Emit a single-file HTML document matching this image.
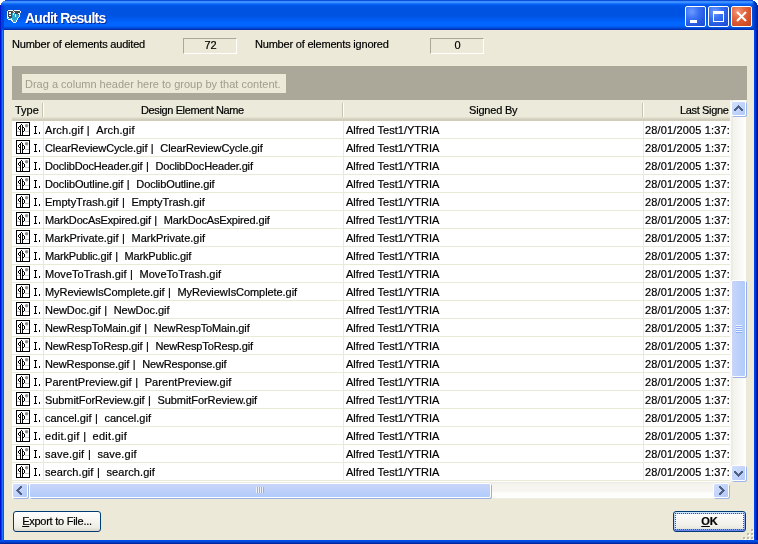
<!DOCTYPE html>
<html><head><meta charset="utf-8"><style>
*{box-sizing:border-box;margin:0;padding:0}
html,body{width:758px;height:544px;overflow:hidden;background:#fff}
body{position:relative;-webkit-text-stroke:0.2px currentColor;font-family:"Liberation Sans",sans-serif;font-size:11px;color:#000}
b,i{font-weight:normal;font-style:normal}
.abs{position:absolute}
#win{will-change:transform;position:absolute;left:0;top:0;width:758px;height:544px;background:#0831d9;overflow:hidden}
.wc{position:absolute;background:#fff;height:1px}
#title{position:absolute;left:0;top:0;width:758px;height:30px;background:linear-gradient(to bottom,#0b4edc 0px,#0b4edc 1px,#3d8fff 1px,#3d8fff 2px,#3d8fff 2px,#3d8fff 3px,#1a74ff 3px,#1a74ff 4px,#0562f6 4px,#0562f6 5px,#0057e8 5px,#0057e8 6px,#0055e5 6px,#0055e5 7px,#0054e3 7px,#0054e3 8px,#0053e2 8px,#0053e2 9px,#0053e1 9px,#0053e1 10px,#0053e1 10px,#0053e1 11px,#0053e1 11px,#0053e1 12px,#0053e1 12px,#0053e1 13px,#0053e1 13px,#0053e1 14px,#0053e1 14px,#0053e1 15px,#0054e3 15px,#0054e3 16px,#0055e5 16px,#0055e5 17px,#0057e8 17px,#0057e8 18px,#005af0 18px,#005af0 19px,#005cf3 19px,#005cf3 20px,#005ef6 20px,#005ef6 21px,#0062fb 21px,#0062fb 22px,#0066ff 22px,#0066ff 23px,#0066ff 23px,#0066ff 24px,#0066ff 24px,#0066ff 25px,#0066ff 25px,#0066ff 26px,#005ef6 26px,#005ef6 27px,#0052e0 27px,#0052e0 28px,#0042cc 28px,#0042cc 29px,#0030b4 29px,#0030b4 30px)}
#frameL{position:absolute;left:0;top:30px;width:4px;height:514px;background:linear-gradient(to right,#0010d0 0,#0010d0 1px,#0a3ee0 1px,#0a3ee0 2px,#1a78ff 2px,#1a78ff 3px,#0058f0 3px,#0058f0 4px)}
#frameR{position:absolute;left:754px;top:30px;width:4px;height:514px;background:linear-gradient(to right,#0044f0 0,#0044f0 1px,#0038e0 1px,#0038e0 2px,#0022b0 2px,#0022b0 3px,#001080 3px,#001080 4px)}
#frameB{position:absolute;left:0;top:540px;width:758px;height:4px;background:linear-gradient(to bottom,#0050e8 0,#0048dc 2px,#0030b0 3px,#001c90 4px)}
#content{position:absolute;left:4px;top:30px;width:750px;height:510px;background:#ece9d8;}
.ttl{-webkit-text-stroke:0;position:absolute;left:25px;top:10px;font-weight:bold;font-size:14px;line-height:16px;color:#fff;text-shadow:1px 1px 0 #0a2a9a;letter-spacing:-0.75px}
.lbl{position:absolute;white-space:pre;line-height:13px}
.box{position:absolute;height:16px;border-top:1px solid #aca899;border-left:1px solid #aca899;border-bottom:1px solid #fff;border-right:1px solid #fff;text-align:center;line-height:13px;padding-left:1px}
#grp{position:absolute;left:12px;top:66px;width:735px;height:34px;background:#aca899}
#grpbox{-webkit-text-stroke:0;position:absolute;left:22px;top:74px;width:264px;height:19px;background:#ece9d8;color:#a09d8b;white-space:pre;line-height:19px;padding-left:3px;padding-top:1px}
#hdr{position:absolute;left:12px;top:100px;width:718px;height:21px;background:linear-gradient(to bottom,#ebeadb 0,#ebeadb 17px,#e4e1d1 17px,#e4e1d1 18px,#dad7c6 18px,#dad7c6 19px,#d0cdbc 19px,#d0cdbc 21px)}
.hd{position:absolute;top:4px;white-space:pre;line-height:13px}
.dv{position:absolute;top:3px;width:2px;height:14px;border-left:1px solid #c7c5b2;border-right:1px solid #fff}
#rows{position:absolute;left:12px;top:0;width:718px;height:481px;overflow:hidden}
.row{position:absolute;left:0;width:718px;height:18px;background:#fff;border-bottom:1px solid #e8e9d6}
.row .ic{position:absolute;left:4px;width:14px;height:14px}
.row .ic svg{display:block}
.I{position:absolute;left:22px;top:5px;width:3px;height:8px;border-top:1px solid #000;border-bottom:1px solid #000}
.I::before{content:"";position:absolute;left:1px;top:0;width:1px;height:6px;background:#000}
.I::after{content:"";position:absolute;left:5px;top:5px;width:1px;height:2px;background:#000}
.row span{position:absolute;top:3px;white-space:pre;line-height:12px}
.bar{}

.c1{left:33px}
.c2{left:334px}
.c3{left:633px;letter-spacing:0.15px}
.vl{position:absolute;top:121px;width:1px;height:360px;background:#e8e9d6}
#vsb{position:absolute;left:730px;top:100px;width:16px;height:382px;background:linear-gradient(to right,#fafaf6 0,#fafaf6 1px,#eeede5 1px,#eeede5 3px,#f3f2ec 3px,#fcfcfa 14px,#fefefd 16px)}
#hsb{position:absolute;left:12px;top:481px;width:718px;height:18px;background:linear-gradient(to bottom,#fdfdfb 0,#fdfdfb 1px,#edece4 1px,#edece4 2px,#f1f0ea 2px,#f5f4ef 4px,#f6f5f1 10px,#fdfdfb 12px,#fdfdfb 17px,#efede2 17px)}
#corner{position:absolute;left:730px;top:482px;width:17px;height:17px;background:#ece9d8}
.sb{position:absolute;border:1px solid #fff;border-radius:2px;background:linear-gradient(135deg,#d2defd 0,#c3d4fb 50%,#b3c8f6 100%);box-shadow:1px 1px 0 #9db6ea}
.sb svg{position:absolute}
.th{position:absolute;border:1px solid #fff;border-radius:2px;box-shadow:1px 1px 0 #98b0e4}
.btn{position:absolute;height:21px;border:1px solid #003c74;border-radius:3px;background:linear-gradient(to bottom,#fff 0,#f6f5f0 45%,#eeede5 80%,#dcd8cc 100%);text-align:center;line-height:19px}
.grip{position:absolute;width:2px;height:2px;background:#bdbaa8;box-shadow:1px 1px 0 #fff}
</style></head><body>

<div id="win">
<div id="title">
<svg class="abs" style="left:6px;top:9px" width="16" height="14" shape-rendering="crispEdges"><rect x="2" y="1" width="5" height="1" fill="#f4f8ff"/><rect x="8" y="1" width="6" height="1" fill="#f4f8ff"/><rect x="1" y="2" width="1" height="1" fill="#f4f8ff"/><rect x="2" y="2" width="5" height="1" fill="#4a4846"/><rect x="7" y="2" width="1" height="1" fill="#f4f8ff"/><rect x="8" y="2" width="6" height="1" fill="#4a4846"/><rect x="14" y="2" width="1" height="1" fill="#f4f8ff"/><rect x="1" y="3" width="1" height="1" fill="#f4f8ff"/><rect x="2" y="3" width="1" height="1" fill="#4a4846"/><rect x="3" y="3" width="2" height="1" fill="#f4f8ff"/><rect x="5" y="3" width="2" height="1" fill="#4a4846"/><rect x="7" y="3" width="1" height="1" fill="#2aa6cf"/><rect x="8" y="3" width="1" height="1" fill="#f4f8ff"/><rect x="9" y="3" width="5" height="1" fill="#4a4846"/><rect x="14" y="3" width="1" height="1" fill="#f4f8ff"/><rect x="1" y="4" width="1" height="1" fill="#f4f8ff"/><rect x="2" y="4" width="1" height="1" fill="#4a4846"/><rect x="3" y="4" width="2" height="1" fill="#f4f8ff"/><rect x="5" y="4" width="1" height="1" fill="#4a4846"/><rect x="6" y="4" width="1" height="1" fill="#2aa6cf"/><rect x="7" y="4" width="1" height="1" fill="#f4f8ff"/><rect x="8" y="4" width="1" height="1" fill="#2aa6cf"/><rect x="9" y="4" width="3" height="1" fill="#4a4846"/><rect x="12" y="4" width="2" height="1" fill="#f4f8ff"/><rect x="1" y="5" width="1" height="1" fill="#f4f8ff"/><rect x="2" y="5" width="4" height="1" fill="#4a4846"/><rect x="6" y="5" width="1" height="1" fill="#2aa6cf"/><rect x="7" y="5" width="1" height="1" fill="#f4f8ff"/><rect x="8" y="5" width="1" height="1" fill="#2aa6cf"/><rect x="9" y="5" width="1" height="1" fill="#f4f8ff"/><rect x="10" y="5" width="2" height="1" fill="#2aa6cf"/><rect x="12" y="5" width="1" height="1" fill="#4a4846"/><rect x="13" y="5" width="1" height="1" fill="#f4f8ff"/><rect x="1" y="6" width="1" height="1" fill="#f4f8ff"/><rect x="2" y="6" width="1" height="1" fill="#4a4846"/><rect x="3" y="6" width="2" height="1" fill="#f4f8ff"/><rect x="5" y="6" width="1" height="1" fill="#4a4846"/><rect x="6" y="6" width="3" height="1" fill="#2aa6cf"/><rect x="9" y="6" width="1" height="1" fill="#f4f8ff"/><rect x="10" y="6" width="3" height="1" fill="#2aa6cf"/><rect x="13" y="6" width="1" height="1" fill="#f4f8ff"/><rect x="1" y="7" width="1" height="1" fill="#f4f8ff"/><rect x="2" y="7" width="4" height="1" fill="#4a4846"/><rect x="6" y="7" width="3" height="1" fill="#2aa6cf"/><rect x="9" y="7" width="1" height="1" fill="#f4f8ff"/><rect x="10" y="7" width="3" height="1" fill="#2aa6cf"/><rect x="13" y="7" width="1" height="1" fill="#f4f8ff"/><rect x="1" y="8" width="2" height="1" fill="#f4f8ff"/><rect x="3" y="8" width="3" height="1" fill="#4a4846"/><rect x="6" y="8" width="6" height="1" fill="#2aa6cf"/><rect x="12" y="8" width="1" height="1" fill="#f4f8ff"/><rect x="1" y="9" width="1" height="1" fill="#f4f8ff"/><rect x="2" y="9" width="3" height="1" fill="#2aa6cf"/><rect x="5" y="9" width="1" height="1" fill="#f4f8ff"/><rect x="6" y="9" width="5" height="1" fill="#2aa6cf"/><rect x="11" y="9" width="1" height="1" fill="#f4f8ff"/><rect x="2" y="10" width="4" height="1" fill="#f4f8ff"/><rect x="6" y="10" width="5" height="1" fill="#2aa6cf"/><rect x="11" y="10" width="1" height="1" fill="#f4f8ff"/><rect x="5" y="11" width="2" height="1" fill="#f4f8ff"/><rect x="7" y="11" width="3" height="1" fill="#2aa6cf"/><rect x="10" y="11" width="1" height="1" fill="#f4f8ff"/><rect x="6" y="12" width="1" height="1" fill="#f4f8ff"/><rect x="7" y="12" width="3" height="1" fill="#2aa6cf"/><rect x="10" y="12" width="1" height="1" fill="#f4f8ff"/><rect x="7" y="13" width="3" height="1" fill="#f4f8ff"/></svg>
<div class="ttl">Audit Results</div>
<div class="abs" style="left:685px;top:6px;width:21px;height:21px;border:1px solid #fff;border-radius:2px;background:radial-gradient(circle at 30% 25%,#6d9bff 0,#3a72f4 35%,#2458e0 70%,#1c4ccc 100%)"><div class="abs" style="left:4px;top:13px;width:7px;height:3px;background:#fff"></div></div>
<div class="abs" style="left:708px;top:6px;width:21px;height:21px;border:1px solid #fff;border-radius:2px;background:radial-gradient(circle at 30% 25%,#6d9bff 0,#3a72f4 35%,#2458e0 70%,#1c4ccc 100%)"><div class="abs" style="left:4px;top:4px;width:11px;height:11px;border:1px solid #fff;border-top-width:3px"></div></div>
<div class="abs" style="left:731px;top:6px;width:21px;height:21px;border:1px solid #fff;border-radius:2px;background:radial-gradient(circle at 30% 25%,#f39a7c 0,#e4683f 35%,#d4502a 70%,#c4441e 100%)"><svg class="abs" style="left:4px;top:4px" width="11" height="11" viewBox="0 0 11 11"><path d="M1 1L10 10M10 1L1 10" stroke="#fff" stroke-width="2"/></svg></div>
</div>
<div class="abs" style="left:0;top:4px;width:4px;height:26px;background:linear-gradient(to bottom,rgba(0,64,220,0) 0,#0040dc 3px)"></div><div class="abs" style="left:0;top:1px;width:1px;height:29px;background:#0018c8"></div>
<div class="abs" style="left:752px;top:1px;width:6px;height:29px;background:linear-gradient(to right,rgba(0,64,216,0),#0040d0 2px,#0030b8 4px,#0020a0)"></div>
<div class="wc" style="left:0;top:0;width:5px"></div><div class="wc" style="left:0;top:1px;width:3px"></div><div class="wc" style="left:0;top:2px;width:2px"></div><div class="wc" style="left:0;top:3px;width:1px;height:2px"></div>
<div class="wc" style="left:753px;top:0;width:5px"></div><div class="wc" style="left:755px;top:1px;width:3px"></div><div class="wc" style="left:756px;top:2px;width:2px"></div><div class="wc" style="left:757px;top:3px;width:1px;height:2px"></div>
<div id="frameL"></div><div id="frameR"></div><div id="frameB"></div>
<div id="content"></div>
<div class="lbl" style="left:12px;top:38px;letter-spacing:-0.2px">Number of elements audited</div>
<div class="box" style="left:183px;top:38px;width:54px">72</div>
<div class="lbl" style="left:255px;top:38px;letter-spacing:-0.2px">Number of elements ignored</div>
<div class="box" style="left:430px;top:38px;width:54px">0</div>
<div id="grp"></div>
<div id="grpbox">Drag a column header here to group by that content.</div>
<div id="hdr">
<div class="hd" style="left:3px">Type</div>
<div class="dv" style="left:30px"></div>
<div class="hd" style="left:129px;letter-spacing:-0.38px">Design Element Name</div>
<div class="dv" style="left:330px"></div>
<div class="hd" style="left:457px;letter-spacing:-0.2px">Signed By</div>
<div class="dv" style="left:630px"></div>
<div class="hd" style="left:668px;letter-spacing:-0.35px">Last Signe</div>
</div>
<div id="rows">
<div class="row" style="top:121px"><div class="ic" style="top:1px"><svg width="14" height="14" viewBox="0 0 14 14"><rect width="14" height="14" fill="#fff"/><g shape-rendering="crispEdges"><rect x="0" y="0" width="14" height="1" fill="#000"/><rect x="0" y="1" width="1" height="1" fill="#000"/><rect x="13" y="1" width="1" height="1" fill="#000"/><rect x="0" y="2" width="1" height="1" fill="#000"/><rect x="5" y="2" width="1" height="1" fill="#000"/><rect x="13" y="2" width="1" height="1" fill="#000"/><rect x="0" y="3" width="1" height="1" fill="#000"/><rect x="4" y="3" width="1" height="1" fill="#000"/><rect x="6" y="3" width="1" height="1" fill="#000"/><rect x="13" y="3" width="1" height="1" fill="#000"/><rect x="0" y="4" width="1" height="1" fill="#000"/><rect x="3" y="4" width="2" height="1" fill="#000"/><rect x="6" y="4" width="1" height="1" fill="#000"/><rect x="13" y="4" width="1" height="1" fill="#000"/><rect x="0" y="5" width="1" height="1" fill="#000"/><rect x="2" y="5" width="1" height="1" fill="#000"/><rect x="4" y="5" width="1" height="1" fill="#000"/><rect x="6" y="5" width="2" height="1" fill="#000"/><rect x="13" y="5" width="1" height="1" fill="#000"/><rect x="0" y="6" width="1" height="1" fill="#000"/><rect x="2" y="6" width="1" height="1" fill="#000"/><rect x="4" y="6" width="1" height="1" fill="#000"/><rect x="6" y="6" width="1" height="1" fill="#000"/><rect x="8" y="6" width="1" height="1" fill="#000"/><rect x="13" y="6" width="1" height="1" fill="#000"/><rect x="0" y="7" width="1" height="1" fill="#000"/><rect x="3" y="7" width="2" height="1" fill="#000"/><rect x="6" y="7" width="1" height="1" fill="#000"/><rect x="8" y="7" width="1" height="1" fill="#000"/><rect x="13" y="7" width="1" height="1" fill="#000"/><rect x="0" y="8" width="1" height="1" fill="#000"/><rect x="4" y="8" width="1" height="1" fill="#000"/><rect x="6" y="8" width="1" height="1" fill="#000"/><rect x="8" y="8" width="1" height="1" fill="#000"/><rect x="13" y="8" width="1" height="1" fill="#000"/><rect x="0" y="9" width="1" height="1" fill="#000"/><rect x="1" y="9" width="3" height="1" fill="#c8c8c8"/><rect x="4" y="9" width="1" height="1" fill="#000"/><rect x="6" y="9" width="2" height="1" fill="#000"/><rect x="9" y="9" width="4" height="1" fill="#c8c8c8"/><rect x="13" y="9" width="1" height="1" fill="#000"/><rect x="0" y="10" width="1" height="1" fill="#000"/><rect x="4" y="10" width="1" height="1" fill="#000"/><rect x="6" y="10" width="1" height="1" fill="#000"/><rect x="13" y="10" width="1" height="1" fill="#000"/><rect x="0" y="11" width="1" height="1" fill="#000"/><rect x="4" y="11" width="1" height="1" fill="#000"/><rect x="6" y="11" width="1" height="1" fill="#000"/><rect x="13" y="11" width="1" height="1" fill="#000"/><rect x="0" y="12" width="1" height="1" fill="#000"/><rect x="4" y="12" width="1" height="1" fill="#000"/><rect x="6" y="12" width="1" height="1" fill="#000"/><rect x="13" y="12" width="1" height="1" fill="#000"/><rect x="0" y="13" width="14" height="1" fill="#000"/></g><circle cx="10.6" cy="3.8" r="1.7" fill="#8f8f8f"/></svg></div><i class="I"></i><span class="c1" style="letter-spacing:0.13px">Arch.gif</span><span class="bar" style="left:74.87px">|</span><span class="c1" style="left:84.30px;letter-spacing:0.13px">Arch.gif</span><span class="c2">Alfred Test1/YTRIA</span><span class="c3">28/01/2005 1:37:</span></div>
<div class="row" style="top:139px"><div class="ic" style="top:1px"><svg width="14" height="14" viewBox="0 0 14 14"><rect width="14" height="14" fill="#fff"/><g shape-rendering="crispEdges"><rect x="0" y="0" width="14" height="1" fill="#000"/><rect x="0" y="1" width="1" height="1" fill="#000"/><rect x="13" y="1" width="1" height="1" fill="#000"/><rect x="0" y="2" width="1" height="1" fill="#000"/><rect x="5" y="2" width="1" height="1" fill="#000"/><rect x="13" y="2" width="1" height="1" fill="#000"/><rect x="0" y="3" width="1" height="1" fill="#000"/><rect x="4" y="3" width="1" height="1" fill="#000"/><rect x="6" y="3" width="1" height="1" fill="#000"/><rect x="13" y="3" width="1" height="1" fill="#000"/><rect x="0" y="4" width="1" height="1" fill="#000"/><rect x="3" y="4" width="2" height="1" fill="#000"/><rect x="6" y="4" width="1" height="1" fill="#000"/><rect x="13" y="4" width="1" height="1" fill="#000"/><rect x="0" y="5" width="1" height="1" fill="#000"/><rect x="2" y="5" width="1" height="1" fill="#000"/><rect x="4" y="5" width="1" height="1" fill="#000"/><rect x="6" y="5" width="2" height="1" fill="#000"/><rect x="13" y="5" width="1" height="1" fill="#000"/><rect x="0" y="6" width="1" height="1" fill="#000"/><rect x="2" y="6" width="1" height="1" fill="#000"/><rect x="4" y="6" width="1" height="1" fill="#000"/><rect x="6" y="6" width="1" height="1" fill="#000"/><rect x="8" y="6" width="1" height="1" fill="#000"/><rect x="13" y="6" width="1" height="1" fill="#000"/><rect x="0" y="7" width="1" height="1" fill="#000"/><rect x="3" y="7" width="2" height="1" fill="#000"/><rect x="6" y="7" width="1" height="1" fill="#000"/><rect x="8" y="7" width="1" height="1" fill="#000"/><rect x="13" y="7" width="1" height="1" fill="#000"/><rect x="0" y="8" width="1" height="1" fill="#000"/><rect x="4" y="8" width="1" height="1" fill="#000"/><rect x="6" y="8" width="1" height="1" fill="#000"/><rect x="8" y="8" width="1" height="1" fill="#000"/><rect x="13" y="8" width="1" height="1" fill="#000"/><rect x="0" y="9" width="1" height="1" fill="#000"/><rect x="1" y="9" width="3" height="1" fill="#c8c8c8"/><rect x="4" y="9" width="1" height="1" fill="#000"/><rect x="6" y="9" width="2" height="1" fill="#000"/><rect x="9" y="9" width="4" height="1" fill="#c8c8c8"/><rect x="13" y="9" width="1" height="1" fill="#000"/><rect x="0" y="10" width="1" height="1" fill="#000"/><rect x="4" y="10" width="1" height="1" fill="#000"/><rect x="6" y="10" width="1" height="1" fill="#000"/><rect x="13" y="10" width="1" height="1" fill="#000"/><rect x="0" y="11" width="1" height="1" fill="#000"/><rect x="4" y="11" width="1" height="1" fill="#000"/><rect x="6" y="11" width="1" height="1" fill="#000"/><rect x="13" y="11" width="1" height="1" fill="#000"/><rect x="0" y="12" width="1" height="1" fill="#000"/><rect x="4" y="12" width="1" height="1" fill="#000"/><rect x="6" y="12" width="1" height="1" fill="#000"/><rect x="13" y="12" width="1" height="1" fill="#000"/><rect x="0" y="13" width="14" height="1" fill="#000"/></g><circle cx="10.6" cy="3.8" r="1.7" fill="#8f8f8f"/></svg></div><i class="I"></i><span class="c1" style="letter-spacing:-0.11px">ClearReviewCycle.gif</span><span class="bar" style="left:138.87px">|</span><span class="c1" style="left:148.30px;letter-spacing:-0.11px">ClearReviewCycle.gif</span><span class="c2">Alfred Test1/YTRIA</span><span class="c3">28/01/2005 1:37:</span></div>
<div class="row" style="top:157px"><div class="ic" style="top:1px"><svg width="14" height="14" viewBox="0 0 14 14"><rect width="14" height="14" fill="#fff"/><g shape-rendering="crispEdges"><rect x="0" y="0" width="14" height="1" fill="#000"/><rect x="0" y="1" width="1" height="1" fill="#000"/><rect x="13" y="1" width="1" height="1" fill="#000"/><rect x="0" y="2" width="1" height="1" fill="#000"/><rect x="5" y="2" width="1" height="1" fill="#000"/><rect x="13" y="2" width="1" height="1" fill="#000"/><rect x="0" y="3" width="1" height="1" fill="#000"/><rect x="4" y="3" width="1" height="1" fill="#000"/><rect x="6" y="3" width="1" height="1" fill="#000"/><rect x="13" y="3" width="1" height="1" fill="#000"/><rect x="0" y="4" width="1" height="1" fill="#000"/><rect x="3" y="4" width="2" height="1" fill="#000"/><rect x="6" y="4" width="1" height="1" fill="#000"/><rect x="13" y="4" width="1" height="1" fill="#000"/><rect x="0" y="5" width="1" height="1" fill="#000"/><rect x="2" y="5" width="1" height="1" fill="#000"/><rect x="4" y="5" width="1" height="1" fill="#000"/><rect x="6" y="5" width="2" height="1" fill="#000"/><rect x="13" y="5" width="1" height="1" fill="#000"/><rect x="0" y="6" width="1" height="1" fill="#000"/><rect x="2" y="6" width="1" height="1" fill="#000"/><rect x="4" y="6" width="1" height="1" fill="#000"/><rect x="6" y="6" width="1" height="1" fill="#000"/><rect x="8" y="6" width="1" height="1" fill="#000"/><rect x="13" y="6" width="1" height="1" fill="#000"/><rect x="0" y="7" width="1" height="1" fill="#000"/><rect x="3" y="7" width="2" height="1" fill="#000"/><rect x="6" y="7" width="1" height="1" fill="#000"/><rect x="8" y="7" width="1" height="1" fill="#000"/><rect x="13" y="7" width="1" height="1" fill="#000"/><rect x="0" y="8" width="1" height="1" fill="#000"/><rect x="4" y="8" width="1" height="1" fill="#000"/><rect x="6" y="8" width="1" height="1" fill="#000"/><rect x="8" y="8" width="1" height="1" fill="#000"/><rect x="13" y="8" width="1" height="1" fill="#000"/><rect x="0" y="9" width="1" height="1" fill="#000"/><rect x="1" y="9" width="3" height="1" fill="#c8c8c8"/><rect x="4" y="9" width="1" height="1" fill="#000"/><rect x="6" y="9" width="2" height="1" fill="#000"/><rect x="9" y="9" width="4" height="1" fill="#c8c8c8"/><rect x="13" y="9" width="1" height="1" fill="#000"/><rect x="0" y="10" width="1" height="1" fill="#000"/><rect x="4" y="10" width="1" height="1" fill="#000"/><rect x="6" y="10" width="1" height="1" fill="#000"/><rect x="13" y="10" width="1" height="1" fill="#000"/><rect x="0" y="11" width="1" height="1" fill="#000"/><rect x="4" y="11" width="1" height="1" fill="#000"/><rect x="6" y="11" width="1" height="1" fill="#000"/><rect x="13" y="11" width="1" height="1" fill="#000"/><rect x="0" y="12" width="1" height="1" fill="#000"/><rect x="4" y="12" width="1" height="1" fill="#000"/><rect x="6" y="12" width="1" height="1" fill="#000"/><rect x="13" y="12" width="1" height="1" fill="#000"/><rect x="0" y="13" width="14" height="1" fill="#000"/></g><circle cx="10.6" cy="3.8" r="1.7" fill="#8f8f8f"/></svg></div><i class="I"></i><span class="c1" style="letter-spacing:-0.15px">DoclibDocHeader.gif</span><span class="bar" style="left:133.97px">|</span><span class="c1" style="left:143.40px;letter-spacing:-0.15px">DoclibDocHeader.gif</span><span class="c2">Alfred Test1/YTRIA</span><span class="c3">28/01/2005 1:37:</span></div>
<div class="row" style="top:175px"><div class="ic" style="top:1px"><svg width="14" height="14" viewBox="0 0 14 14"><rect width="14" height="14" fill="#fff"/><g shape-rendering="crispEdges"><rect x="0" y="0" width="14" height="1" fill="#000"/><rect x="0" y="1" width="1" height="1" fill="#000"/><rect x="13" y="1" width="1" height="1" fill="#000"/><rect x="0" y="2" width="1" height="1" fill="#000"/><rect x="5" y="2" width="1" height="1" fill="#000"/><rect x="13" y="2" width="1" height="1" fill="#000"/><rect x="0" y="3" width="1" height="1" fill="#000"/><rect x="4" y="3" width="1" height="1" fill="#000"/><rect x="6" y="3" width="1" height="1" fill="#000"/><rect x="13" y="3" width="1" height="1" fill="#000"/><rect x="0" y="4" width="1" height="1" fill="#000"/><rect x="3" y="4" width="2" height="1" fill="#000"/><rect x="6" y="4" width="1" height="1" fill="#000"/><rect x="13" y="4" width="1" height="1" fill="#000"/><rect x="0" y="5" width="1" height="1" fill="#000"/><rect x="2" y="5" width="1" height="1" fill="#000"/><rect x="4" y="5" width="1" height="1" fill="#000"/><rect x="6" y="5" width="2" height="1" fill="#000"/><rect x="13" y="5" width="1" height="1" fill="#000"/><rect x="0" y="6" width="1" height="1" fill="#000"/><rect x="2" y="6" width="1" height="1" fill="#000"/><rect x="4" y="6" width="1" height="1" fill="#000"/><rect x="6" y="6" width="1" height="1" fill="#000"/><rect x="8" y="6" width="1" height="1" fill="#000"/><rect x="13" y="6" width="1" height="1" fill="#000"/><rect x="0" y="7" width="1" height="1" fill="#000"/><rect x="3" y="7" width="2" height="1" fill="#000"/><rect x="6" y="7" width="1" height="1" fill="#000"/><rect x="8" y="7" width="1" height="1" fill="#000"/><rect x="13" y="7" width="1" height="1" fill="#000"/><rect x="0" y="8" width="1" height="1" fill="#000"/><rect x="4" y="8" width="1" height="1" fill="#000"/><rect x="6" y="8" width="1" height="1" fill="#000"/><rect x="8" y="8" width="1" height="1" fill="#000"/><rect x="13" y="8" width="1" height="1" fill="#000"/><rect x="0" y="9" width="1" height="1" fill="#000"/><rect x="1" y="9" width="3" height="1" fill="#c8c8c8"/><rect x="4" y="9" width="1" height="1" fill="#000"/><rect x="6" y="9" width="2" height="1" fill="#000"/><rect x="9" y="9" width="4" height="1" fill="#c8c8c8"/><rect x="13" y="9" width="1" height="1" fill="#000"/><rect x="0" y="10" width="1" height="1" fill="#000"/><rect x="4" y="10" width="1" height="1" fill="#000"/><rect x="6" y="10" width="1" height="1" fill="#000"/><rect x="13" y="10" width="1" height="1" fill="#000"/><rect x="0" y="11" width="1" height="1" fill="#000"/><rect x="4" y="11" width="1" height="1" fill="#000"/><rect x="6" y="11" width="1" height="1" fill="#000"/><rect x="13" y="11" width="1" height="1" fill="#000"/><rect x="0" y="12" width="1" height="1" fill="#000"/><rect x="4" y="12" width="1" height="1" fill="#000"/><rect x="6" y="12" width="1" height="1" fill="#000"/><rect x="13" y="12" width="1" height="1" fill="#000"/><rect x="0" y="13" width="14" height="1" fill="#000"/></g><circle cx="10.6" cy="3.8" r="1.7" fill="#8f8f8f"/></svg></div><i class="I"></i><span class="c1" style="letter-spacing:-0.11px">DoclibOutline.gif</span><span class="bar" style="left:114.87px">|</span><span class="c1" style="left:124.30px;letter-spacing:-0.11px">DoclibOutline.gif</span><span class="c2">Alfred Test1/YTRIA</span><span class="c3">28/01/2005 1:37:</span></div>
<div class="row" style="top:193px"><div class="ic" style="top:1px"><svg width="14" height="14" viewBox="0 0 14 14"><rect width="14" height="14" fill="#fff"/><g shape-rendering="crispEdges"><rect x="0" y="0" width="14" height="1" fill="#000"/><rect x="0" y="1" width="1" height="1" fill="#000"/><rect x="13" y="1" width="1" height="1" fill="#000"/><rect x="0" y="2" width="1" height="1" fill="#000"/><rect x="5" y="2" width="1" height="1" fill="#000"/><rect x="13" y="2" width="1" height="1" fill="#000"/><rect x="0" y="3" width="1" height="1" fill="#000"/><rect x="4" y="3" width="1" height="1" fill="#000"/><rect x="6" y="3" width="1" height="1" fill="#000"/><rect x="13" y="3" width="1" height="1" fill="#000"/><rect x="0" y="4" width="1" height="1" fill="#000"/><rect x="3" y="4" width="2" height="1" fill="#000"/><rect x="6" y="4" width="1" height="1" fill="#000"/><rect x="13" y="4" width="1" height="1" fill="#000"/><rect x="0" y="5" width="1" height="1" fill="#000"/><rect x="2" y="5" width="1" height="1" fill="#000"/><rect x="4" y="5" width="1" height="1" fill="#000"/><rect x="6" y="5" width="2" height="1" fill="#000"/><rect x="13" y="5" width="1" height="1" fill="#000"/><rect x="0" y="6" width="1" height="1" fill="#000"/><rect x="2" y="6" width="1" height="1" fill="#000"/><rect x="4" y="6" width="1" height="1" fill="#000"/><rect x="6" y="6" width="1" height="1" fill="#000"/><rect x="8" y="6" width="1" height="1" fill="#000"/><rect x="13" y="6" width="1" height="1" fill="#000"/><rect x="0" y="7" width="1" height="1" fill="#000"/><rect x="3" y="7" width="2" height="1" fill="#000"/><rect x="6" y="7" width="1" height="1" fill="#000"/><rect x="8" y="7" width="1" height="1" fill="#000"/><rect x="13" y="7" width="1" height="1" fill="#000"/><rect x="0" y="8" width="1" height="1" fill="#000"/><rect x="4" y="8" width="1" height="1" fill="#000"/><rect x="6" y="8" width="1" height="1" fill="#000"/><rect x="8" y="8" width="1" height="1" fill="#000"/><rect x="13" y="8" width="1" height="1" fill="#000"/><rect x="0" y="9" width="1" height="1" fill="#000"/><rect x="1" y="9" width="3" height="1" fill="#c8c8c8"/><rect x="4" y="9" width="1" height="1" fill="#000"/><rect x="6" y="9" width="2" height="1" fill="#000"/><rect x="9" y="9" width="4" height="1" fill="#c8c8c8"/><rect x="13" y="9" width="1" height="1" fill="#000"/><rect x="0" y="10" width="1" height="1" fill="#000"/><rect x="4" y="10" width="1" height="1" fill="#000"/><rect x="6" y="10" width="1" height="1" fill="#000"/><rect x="13" y="10" width="1" height="1" fill="#000"/><rect x="0" y="11" width="1" height="1" fill="#000"/><rect x="4" y="11" width="1" height="1" fill="#000"/><rect x="6" y="11" width="1" height="1" fill="#000"/><rect x="13" y="11" width="1" height="1" fill="#000"/><rect x="0" y="12" width="1" height="1" fill="#000"/><rect x="4" y="12" width="1" height="1" fill="#000"/><rect x="6" y="12" width="1" height="1" fill="#000"/><rect x="13" y="12" width="1" height="1" fill="#000"/><rect x="0" y="13" width="14" height="1" fill="#000"/></g><circle cx="10.6" cy="3.8" r="1.7" fill="#8f8f8f"/></svg></div><i class="I"></i><span class="c1" style="letter-spacing:-0.01px">EmptyTrash.gif</span><span class="bar" style="left:109.97px">|</span><span class="c1" style="left:119.40px;letter-spacing:-0.01px">EmptyTrash.gif</span><span class="c2">Alfred Test1/YTRIA</span><span class="c3">28/01/2005 1:37:</span></div>
<div class="row" style="top:211px"><div class="ic" style="top:1px"><svg width="14" height="14" viewBox="0 0 14 14"><rect width="14" height="14" fill="#fff"/><g shape-rendering="crispEdges"><rect x="0" y="0" width="14" height="1" fill="#000"/><rect x="0" y="1" width="1" height="1" fill="#000"/><rect x="13" y="1" width="1" height="1" fill="#000"/><rect x="0" y="2" width="1" height="1" fill="#000"/><rect x="5" y="2" width="1" height="1" fill="#000"/><rect x="13" y="2" width="1" height="1" fill="#000"/><rect x="0" y="3" width="1" height="1" fill="#000"/><rect x="4" y="3" width="1" height="1" fill="#000"/><rect x="6" y="3" width="1" height="1" fill="#000"/><rect x="13" y="3" width="1" height="1" fill="#000"/><rect x="0" y="4" width="1" height="1" fill="#000"/><rect x="3" y="4" width="2" height="1" fill="#000"/><rect x="6" y="4" width="1" height="1" fill="#000"/><rect x="13" y="4" width="1" height="1" fill="#000"/><rect x="0" y="5" width="1" height="1" fill="#000"/><rect x="2" y="5" width="1" height="1" fill="#000"/><rect x="4" y="5" width="1" height="1" fill="#000"/><rect x="6" y="5" width="2" height="1" fill="#000"/><rect x="13" y="5" width="1" height="1" fill="#000"/><rect x="0" y="6" width="1" height="1" fill="#000"/><rect x="2" y="6" width="1" height="1" fill="#000"/><rect x="4" y="6" width="1" height="1" fill="#000"/><rect x="6" y="6" width="1" height="1" fill="#000"/><rect x="8" y="6" width="1" height="1" fill="#000"/><rect x="13" y="6" width="1" height="1" fill="#000"/><rect x="0" y="7" width="1" height="1" fill="#000"/><rect x="3" y="7" width="2" height="1" fill="#000"/><rect x="6" y="7" width="1" height="1" fill="#000"/><rect x="8" y="7" width="1" height="1" fill="#000"/><rect x="13" y="7" width="1" height="1" fill="#000"/><rect x="0" y="8" width="1" height="1" fill="#000"/><rect x="4" y="8" width="1" height="1" fill="#000"/><rect x="6" y="8" width="1" height="1" fill="#000"/><rect x="8" y="8" width="1" height="1" fill="#000"/><rect x="13" y="8" width="1" height="1" fill="#000"/><rect x="0" y="9" width="1" height="1" fill="#000"/><rect x="1" y="9" width="3" height="1" fill="#c8c8c8"/><rect x="4" y="9" width="1" height="1" fill="#000"/><rect x="6" y="9" width="2" height="1" fill="#000"/><rect x="9" y="9" width="4" height="1" fill="#c8c8c8"/><rect x="13" y="9" width="1" height="1" fill="#000"/><rect x="0" y="10" width="1" height="1" fill="#000"/><rect x="4" y="10" width="1" height="1" fill="#000"/><rect x="6" y="10" width="1" height="1" fill="#000"/><rect x="13" y="10" width="1" height="1" fill="#000"/><rect x="0" y="11" width="1" height="1" fill="#000"/><rect x="4" y="11" width="1" height="1" fill="#000"/><rect x="6" y="11" width="1" height="1" fill="#000"/><rect x="13" y="11" width="1" height="1" fill="#000"/><rect x="0" y="12" width="1" height="1" fill="#000"/><rect x="4" y="12" width="1" height="1" fill="#000"/><rect x="6" y="12" width="1" height="1" fill="#000"/><rect x="13" y="12" width="1" height="1" fill="#000"/><rect x="0" y="13" width="14" height="1" fill="#000"/></g><circle cx="10.6" cy="3.8" r="1.7" fill="#8f8f8f"/></svg></div><i class="I"></i><span class="c1" style="letter-spacing:-0.15px">MarkDocAsExpired.gif</span><span class="bar" style="left:142.37px">|</span><span class="c1" style="left:151.80px;letter-spacing:-0.15px">MarkDocAsExpired.gif</span><span class="c2">Alfred Test1/YTRIA</span><span class="c3">28/01/2005 1:37:</span></div>
<div class="row" style="top:229px"><div class="ic" style="top:1px"><svg width="14" height="14" viewBox="0 0 14 14"><rect width="14" height="14" fill="#fff"/><g shape-rendering="crispEdges"><rect x="0" y="0" width="14" height="1" fill="#000"/><rect x="0" y="1" width="1" height="1" fill="#000"/><rect x="13" y="1" width="1" height="1" fill="#000"/><rect x="0" y="2" width="1" height="1" fill="#000"/><rect x="5" y="2" width="1" height="1" fill="#000"/><rect x="13" y="2" width="1" height="1" fill="#000"/><rect x="0" y="3" width="1" height="1" fill="#000"/><rect x="4" y="3" width="1" height="1" fill="#000"/><rect x="6" y="3" width="1" height="1" fill="#000"/><rect x="13" y="3" width="1" height="1" fill="#000"/><rect x="0" y="4" width="1" height="1" fill="#000"/><rect x="3" y="4" width="2" height="1" fill="#000"/><rect x="6" y="4" width="1" height="1" fill="#000"/><rect x="13" y="4" width="1" height="1" fill="#000"/><rect x="0" y="5" width="1" height="1" fill="#000"/><rect x="2" y="5" width="1" height="1" fill="#000"/><rect x="4" y="5" width="1" height="1" fill="#000"/><rect x="6" y="5" width="2" height="1" fill="#000"/><rect x="13" y="5" width="1" height="1" fill="#000"/><rect x="0" y="6" width="1" height="1" fill="#000"/><rect x="2" y="6" width="1" height="1" fill="#000"/><rect x="4" y="6" width="1" height="1" fill="#000"/><rect x="6" y="6" width="1" height="1" fill="#000"/><rect x="8" y="6" width="1" height="1" fill="#000"/><rect x="13" y="6" width="1" height="1" fill="#000"/><rect x="0" y="7" width="1" height="1" fill="#000"/><rect x="3" y="7" width="2" height="1" fill="#000"/><rect x="6" y="7" width="1" height="1" fill="#000"/><rect x="8" y="7" width="1" height="1" fill="#000"/><rect x="13" y="7" width="1" height="1" fill="#000"/><rect x="0" y="8" width="1" height="1" fill="#000"/><rect x="4" y="8" width="1" height="1" fill="#000"/><rect x="6" y="8" width="1" height="1" fill="#000"/><rect x="8" y="8" width="1" height="1" fill="#000"/><rect x="13" y="8" width="1" height="1" fill="#000"/><rect x="0" y="9" width="1" height="1" fill="#000"/><rect x="1" y="9" width="3" height="1" fill="#c8c8c8"/><rect x="4" y="9" width="1" height="1" fill="#000"/><rect x="6" y="9" width="2" height="1" fill="#000"/><rect x="9" y="9" width="4" height="1" fill="#c8c8c8"/><rect x="13" y="9" width="1" height="1" fill="#000"/><rect x="0" y="10" width="1" height="1" fill="#000"/><rect x="4" y="10" width="1" height="1" fill="#000"/><rect x="6" y="10" width="1" height="1" fill="#000"/><rect x="13" y="10" width="1" height="1" fill="#000"/><rect x="0" y="11" width="1" height="1" fill="#000"/><rect x="4" y="11" width="1" height="1" fill="#000"/><rect x="6" y="11" width="1" height="1" fill="#000"/><rect x="13" y="11" width="1" height="1" fill="#000"/><rect x="0" y="12" width="1" height="1" fill="#000"/><rect x="4" y="12" width="1" height="1" fill="#000"/><rect x="6" y="12" width="1" height="1" fill="#000"/><rect x="13" y="12" width="1" height="1" fill="#000"/><rect x="0" y="13" width="14" height="1" fill="#000"/></g><circle cx="10.6" cy="3.8" r="1.7" fill="#8f8f8f"/></svg></div><i class="I"></i><span class="c1" style="letter-spacing:0.01px">MarkPrivate.gif</span><span class="bar" style="left:110.07px">|</span><span class="c1" style="left:119.50px;letter-spacing:0.01px">MarkPrivate.gif</span><span class="c2">Alfred Test1/YTRIA</span><span class="c3">28/01/2005 1:37:</span></div>
<div class="row" style="top:247px"><div class="ic" style="top:1px"><svg width="14" height="14" viewBox="0 0 14 14"><rect width="14" height="14" fill="#fff"/><g shape-rendering="crispEdges"><rect x="0" y="0" width="14" height="1" fill="#000"/><rect x="0" y="1" width="1" height="1" fill="#000"/><rect x="13" y="1" width="1" height="1" fill="#000"/><rect x="0" y="2" width="1" height="1" fill="#000"/><rect x="5" y="2" width="1" height="1" fill="#000"/><rect x="13" y="2" width="1" height="1" fill="#000"/><rect x="0" y="3" width="1" height="1" fill="#000"/><rect x="4" y="3" width="1" height="1" fill="#000"/><rect x="6" y="3" width="1" height="1" fill="#000"/><rect x="13" y="3" width="1" height="1" fill="#000"/><rect x="0" y="4" width="1" height="1" fill="#000"/><rect x="3" y="4" width="2" height="1" fill="#000"/><rect x="6" y="4" width="1" height="1" fill="#000"/><rect x="13" y="4" width="1" height="1" fill="#000"/><rect x="0" y="5" width="1" height="1" fill="#000"/><rect x="2" y="5" width="1" height="1" fill="#000"/><rect x="4" y="5" width="1" height="1" fill="#000"/><rect x="6" y="5" width="2" height="1" fill="#000"/><rect x="13" y="5" width="1" height="1" fill="#000"/><rect x="0" y="6" width="1" height="1" fill="#000"/><rect x="2" y="6" width="1" height="1" fill="#000"/><rect x="4" y="6" width="1" height="1" fill="#000"/><rect x="6" y="6" width="1" height="1" fill="#000"/><rect x="8" y="6" width="1" height="1" fill="#000"/><rect x="13" y="6" width="1" height="1" fill="#000"/><rect x="0" y="7" width="1" height="1" fill="#000"/><rect x="3" y="7" width="2" height="1" fill="#000"/><rect x="6" y="7" width="1" height="1" fill="#000"/><rect x="8" y="7" width="1" height="1" fill="#000"/><rect x="13" y="7" width="1" height="1" fill="#000"/><rect x="0" y="8" width="1" height="1" fill="#000"/><rect x="4" y="8" width="1" height="1" fill="#000"/><rect x="6" y="8" width="1" height="1" fill="#000"/><rect x="8" y="8" width="1" height="1" fill="#000"/><rect x="13" y="8" width="1" height="1" fill="#000"/><rect x="0" y="9" width="1" height="1" fill="#000"/><rect x="1" y="9" width="3" height="1" fill="#c8c8c8"/><rect x="4" y="9" width="1" height="1" fill="#000"/><rect x="6" y="9" width="2" height="1" fill="#000"/><rect x="9" y="9" width="4" height="1" fill="#c8c8c8"/><rect x="13" y="9" width="1" height="1" fill="#000"/><rect x="0" y="10" width="1" height="1" fill="#000"/><rect x="4" y="10" width="1" height="1" fill="#000"/><rect x="6" y="10" width="1" height="1" fill="#000"/><rect x="13" y="10" width="1" height="1" fill="#000"/><rect x="0" y="11" width="1" height="1" fill="#000"/><rect x="4" y="11" width="1" height="1" fill="#000"/><rect x="6" y="11" width="1" height="1" fill="#000"/><rect x="13" y="11" width="1" height="1" fill="#000"/><rect x="0" y="12" width="1" height="1" fill="#000"/><rect x="4" y="12" width="1" height="1" fill="#000"/><rect x="6" y="12" width="1" height="1" fill="#000"/><rect x="13" y="12" width="1" height="1" fill="#000"/><rect x="0" y="13" width="14" height="1" fill="#000"/></g><circle cx="10.6" cy="3.8" r="1.7" fill="#8f8f8f"/></svg></div><i class="I"></i><span class="c1" style="letter-spacing:-0.18px">MarkPublic.gif</span><span class="bar" style="left:103.17px">|</span><span class="c1" style="left:112.60px;letter-spacing:-0.18px">MarkPublic.gif</span><span class="c2">Alfred Test1/YTRIA</span><span class="c3">28/01/2005 1:37:</span></div>
<div class="row" style="top:265px"><div class="ic" style="top:1px"><svg width="14" height="14" viewBox="0 0 14 14"><rect width="14" height="14" fill="#fff"/><g shape-rendering="crispEdges"><rect x="0" y="0" width="14" height="1" fill="#000"/><rect x="0" y="1" width="1" height="1" fill="#000"/><rect x="13" y="1" width="1" height="1" fill="#000"/><rect x="0" y="2" width="1" height="1" fill="#000"/><rect x="5" y="2" width="1" height="1" fill="#000"/><rect x="13" y="2" width="1" height="1" fill="#000"/><rect x="0" y="3" width="1" height="1" fill="#000"/><rect x="4" y="3" width="1" height="1" fill="#000"/><rect x="6" y="3" width="1" height="1" fill="#000"/><rect x="13" y="3" width="1" height="1" fill="#000"/><rect x="0" y="4" width="1" height="1" fill="#000"/><rect x="3" y="4" width="2" height="1" fill="#000"/><rect x="6" y="4" width="1" height="1" fill="#000"/><rect x="13" y="4" width="1" height="1" fill="#000"/><rect x="0" y="5" width="1" height="1" fill="#000"/><rect x="2" y="5" width="1" height="1" fill="#000"/><rect x="4" y="5" width="1" height="1" fill="#000"/><rect x="6" y="5" width="2" height="1" fill="#000"/><rect x="13" y="5" width="1" height="1" fill="#000"/><rect x="0" y="6" width="1" height="1" fill="#000"/><rect x="2" y="6" width="1" height="1" fill="#000"/><rect x="4" y="6" width="1" height="1" fill="#000"/><rect x="6" y="6" width="1" height="1" fill="#000"/><rect x="8" y="6" width="1" height="1" fill="#000"/><rect x="13" y="6" width="1" height="1" fill="#000"/><rect x="0" y="7" width="1" height="1" fill="#000"/><rect x="3" y="7" width="2" height="1" fill="#000"/><rect x="6" y="7" width="1" height="1" fill="#000"/><rect x="8" y="7" width="1" height="1" fill="#000"/><rect x="13" y="7" width="1" height="1" fill="#000"/><rect x="0" y="8" width="1" height="1" fill="#000"/><rect x="4" y="8" width="1" height="1" fill="#000"/><rect x="6" y="8" width="1" height="1" fill="#000"/><rect x="8" y="8" width="1" height="1" fill="#000"/><rect x="13" y="8" width="1" height="1" fill="#000"/><rect x="0" y="9" width="1" height="1" fill="#000"/><rect x="1" y="9" width="3" height="1" fill="#c8c8c8"/><rect x="4" y="9" width="1" height="1" fill="#000"/><rect x="6" y="9" width="2" height="1" fill="#000"/><rect x="9" y="9" width="4" height="1" fill="#c8c8c8"/><rect x="13" y="9" width="1" height="1" fill="#000"/><rect x="0" y="10" width="1" height="1" fill="#000"/><rect x="4" y="10" width="1" height="1" fill="#000"/><rect x="6" y="10" width="1" height="1" fill="#000"/><rect x="13" y="10" width="1" height="1" fill="#000"/><rect x="0" y="11" width="1" height="1" fill="#000"/><rect x="4" y="11" width="1" height="1" fill="#000"/><rect x="6" y="11" width="1" height="1" fill="#000"/><rect x="13" y="11" width="1" height="1" fill="#000"/><rect x="0" y="12" width="1" height="1" fill="#000"/><rect x="4" y="12" width="1" height="1" fill="#000"/><rect x="6" y="12" width="1" height="1" fill="#000"/><rect x="13" y="12" width="1" height="1" fill="#000"/><rect x="0" y="13" width="14" height="1" fill="#000"/></g><circle cx="10.6" cy="3.8" r="1.7" fill="#8f8f8f"/></svg></div><i class="I"></i><span class="c1" style="letter-spacing:0.04px">MoveToTrash.gif</span><span class="bar" style="left:118.07px">|</span><span class="c1" style="left:127.50px;letter-spacing:0.04px">MoveToTrash.gif</span><span class="c2">Alfred Test1/YTRIA</span><span class="c3">28/01/2005 1:37:</span></div>
<div class="row" style="top:283px"><div class="ic" style="top:1px"><svg width="14" height="14" viewBox="0 0 14 14"><rect width="14" height="14" fill="#fff"/><g shape-rendering="crispEdges"><rect x="0" y="0" width="14" height="1" fill="#000"/><rect x="0" y="1" width="1" height="1" fill="#000"/><rect x="13" y="1" width="1" height="1" fill="#000"/><rect x="0" y="2" width="1" height="1" fill="#000"/><rect x="5" y="2" width="1" height="1" fill="#000"/><rect x="13" y="2" width="1" height="1" fill="#000"/><rect x="0" y="3" width="1" height="1" fill="#000"/><rect x="4" y="3" width="1" height="1" fill="#000"/><rect x="6" y="3" width="1" height="1" fill="#000"/><rect x="13" y="3" width="1" height="1" fill="#000"/><rect x="0" y="4" width="1" height="1" fill="#000"/><rect x="3" y="4" width="2" height="1" fill="#000"/><rect x="6" y="4" width="1" height="1" fill="#000"/><rect x="13" y="4" width="1" height="1" fill="#000"/><rect x="0" y="5" width="1" height="1" fill="#000"/><rect x="2" y="5" width="1" height="1" fill="#000"/><rect x="4" y="5" width="1" height="1" fill="#000"/><rect x="6" y="5" width="2" height="1" fill="#000"/><rect x="13" y="5" width="1" height="1" fill="#000"/><rect x="0" y="6" width="1" height="1" fill="#000"/><rect x="2" y="6" width="1" height="1" fill="#000"/><rect x="4" y="6" width="1" height="1" fill="#000"/><rect x="6" y="6" width="1" height="1" fill="#000"/><rect x="8" y="6" width="1" height="1" fill="#000"/><rect x="13" y="6" width="1" height="1" fill="#000"/><rect x="0" y="7" width="1" height="1" fill="#000"/><rect x="3" y="7" width="2" height="1" fill="#000"/><rect x="6" y="7" width="1" height="1" fill="#000"/><rect x="8" y="7" width="1" height="1" fill="#000"/><rect x="13" y="7" width="1" height="1" fill="#000"/><rect x="0" y="8" width="1" height="1" fill="#000"/><rect x="4" y="8" width="1" height="1" fill="#000"/><rect x="6" y="8" width="1" height="1" fill="#000"/><rect x="8" y="8" width="1" height="1" fill="#000"/><rect x="13" y="8" width="1" height="1" fill="#000"/><rect x="0" y="9" width="1" height="1" fill="#000"/><rect x="1" y="9" width="3" height="1" fill="#c8c8c8"/><rect x="4" y="9" width="1" height="1" fill="#000"/><rect x="6" y="9" width="2" height="1" fill="#000"/><rect x="9" y="9" width="4" height="1" fill="#c8c8c8"/><rect x="13" y="9" width="1" height="1" fill="#000"/><rect x="0" y="10" width="1" height="1" fill="#000"/><rect x="4" y="10" width="1" height="1" fill="#000"/><rect x="6" y="10" width="1" height="1" fill="#000"/><rect x="13" y="10" width="1" height="1" fill="#000"/><rect x="0" y="11" width="1" height="1" fill="#000"/><rect x="4" y="11" width="1" height="1" fill="#000"/><rect x="6" y="11" width="1" height="1" fill="#000"/><rect x="13" y="11" width="1" height="1" fill="#000"/><rect x="0" y="12" width="1" height="1" fill="#000"/><rect x="4" y="12" width="1" height="1" fill="#000"/><rect x="6" y="12" width="1" height="1" fill="#000"/><rect x="13" y="12" width="1" height="1" fill="#000"/><rect x="0" y="13" width="14" height="1" fill="#000"/></g><circle cx="10.6" cy="3.8" r="1.7" fill="#8f8f8f"/></svg></div><i class="I"></i><span class="c1" style="letter-spacing:-0.07px">MyReviewIsComplete.gif</span><span class="bar" style="left:156.07px">|</span><span class="c1" style="left:165.50px;letter-spacing:-0.07px">MyReviewIsComplete.gif</span><span class="c2">Alfred Test1/YTRIA</span><span class="c3">28/01/2005 1:37:</span></div>
<div class="row" style="top:301px"><div class="ic" style="top:1px"><svg width="14" height="14" viewBox="0 0 14 14"><rect width="14" height="14" fill="#fff"/><g shape-rendering="crispEdges"><rect x="0" y="0" width="14" height="1" fill="#000"/><rect x="0" y="1" width="1" height="1" fill="#000"/><rect x="13" y="1" width="1" height="1" fill="#000"/><rect x="0" y="2" width="1" height="1" fill="#000"/><rect x="5" y="2" width="1" height="1" fill="#000"/><rect x="13" y="2" width="1" height="1" fill="#000"/><rect x="0" y="3" width="1" height="1" fill="#000"/><rect x="4" y="3" width="1" height="1" fill="#000"/><rect x="6" y="3" width="1" height="1" fill="#000"/><rect x="13" y="3" width="1" height="1" fill="#000"/><rect x="0" y="4" width="1" height="1" fill="#000"/><rect x="3" y="4" width="2" height="1" fill="#000"/><rect x="6" y="4" width="1" height="1" fill="#000"/><rect x="13" y="4" width="1" height="1" fill="#000"/><rect x="0" y="5" width="1" height="1" fill="#000"/><rect x="2" y="5" width="1" height="1" fill="#000"/><rect x="4" y="5" width="1" height="1" fill="#000"/><rect x="6" y="5" width="2" height="1" fill="#000"/><rect x="13" y="5" width="1" height="1" fill="#000"/><rect x="0" y="6" width="1" height="1" fill="#000"/><rect x="2" y="6" width="1" height="1" fill="#000"/><rect x="4" y="6" width="1" height="1" fill="#000"/><rect x="6" y="6" width="1" height="1" fill="#000"/><rect x="8" y="6" width="1" height="1" fill="#000"/><rect x="13" y="6" width="1" height="1" fill="#000"/><rect x="0" y="7" width="1" height="1" fill="#000"/><rect x="3" y="7" width="2" height="1" fill="#000"/><rect x="6" y="7" width="1" height="1" fill="#000"/><rect x="8" y="7" width="1" height="1" fill="#000"/><rect x="13" y="7" width="1" height="1" fill="#000"/><rect x="0" y="8" width="1" height="1" fill="#000"/><rect x="4" y="8" width="1" height="1" fill="#000"/><rect x="6" y="8" width="1" height="1" fill="#000"/><rect x="8" y="8" width="1" height="1" fill="#000"/><rect x="13" y="8" width="1" height="1" fill="#000"/><rect x="0" y="9" width="1" height="1" fill="#000"/><rect x="1" y="9" width="3" height="1" fill="#c8c8c8"/><rect x="4" y="9" width="1" height="1" fill="#000"/><rect x="6" y="9" width="2" height="1" fill="#000"/><rect x="9" y="9" width="4" height="1" fill="#c8c8c8"/><rect x="13" y="9" width="1" height="1" fill="#000"/><rect x="0" y="10" width="1" height="1" fill="#000"/><rect x="4" y="10" width="1" height="1" fill="#000"/><rect x="6" y="10" width="1" height="1" fill="#000"/><rect x="13" y="10" width="1" height="1" fill="#000"/><rect x="0" y="11" width="1" height="1" fill="#000"/><rect x="4" y="11" width="1" height="1" fill="#000"/><rect x="6" y="11" width="1" height="1" fill="#000"/><rect x="13" y="11" width="1" height="1" fill="#000"/><rect x="0" y="12" width="1" height="1" fill="#000"/><rect x="4" y="12" width="1" height="1" fill="#000"/><rect x="6" y="12" width="1" height="1" fill="#000"/><rect x="13" y="12" width="1" height="1" fill="#000"/><rect x="0" y="13" width="14" height="1" fill="#000"/></g><circle cx="10.6" cy="3.8" r="1.7" fill="#8f8f8f"/></svg></div><i class="I"></i><span class="c1" style="letter-spacing:-0.05px">NewDoc.gif</span><span class="bar" style="left:92.27px">|</span><span class="c1" style="left:101.70px;letter-spacing:-0.05px">NewDoc.gif</span><span class="c2">Alfred Test1/YTRIA</span><span class="c3">28/01/2005 1:37:</span></div>
<div class="row" style="top:319px"><div class="ic" style="top:1px"><svg width="14" height="14" viewBox="0 0 14 14"><rect width="14" height="14" fill="#fff"/><g shape-rendering="crispEdges"><rect x="0" y="0" width="14" height="1" fill="#000"/><rect x="0" y="1" width="1" height="1" fill="#000"/><rect x="13" y="1" width="1" height="1" fill="#000"/><rect x="0" y="2" width="1" height="1" fill="#000"/><rect x="5" y="2" width="1" height="1" fill="#000"/><rect x="13" y="2" width="1" height="1" fill="#000"/><rect x="0" y="3" width="1" height="1" fill="#000"/><rect x="4" y="3" width="1" height="1" fill="#000"/><rect x="6" y="3" width="1" height="1" fill="#000"/><rect x="13" y="3" width="1" height="1" fill="#000"/><rect x="0" y="4" width="1" height="1" fill="#000"/><rect x="3" y="4" width="2" height="1" fill="#000"/><rect x="6" y="4" width="1" height="1" fill="#000"/><rect x="13" y="4" width="1" height="1" fill="#000"/><rect x="0" y="5" width="1" height="1" fill="#000"/><rect x="2" y="5" width="1" height="1" fill="#000"/><rect x="4" y="5" width="1" height="1" fill="#000"/><rect x="6" y="5" width="2" height="1" fill="#000"/><rect x="13" y="5" width="1" height="1" fill="#000"/><rect x="0" y="6" width="1" height="1" fill="#000"/><rect x="2" y="6" width="1" height="1" fill="#000"/><rect x="4" y="6" width="1" height="1" fill="#000"/><rect x="6" y="6" width="1" height="1" fill="#000"/><rect x="8" y="6" width="1" height="1" fill="#000"/><rect x="13" y="6" width="1" height="1" fill="#000"/><rect x="0" y="7" width="1" height="1" fill="#000"/><rect x="3" y="7" width="2" height="1" fill="#000"/><rect x="6" y="7" width="1" height="1" fill="#000"/><rect x="8" y="7" width="1" height="1" fill="#000"/><rect x="13" y="7" width="1" height="1" fill="#000"/><rect x="0" y="8" width="1" height="1" fill="#000"/><rect x="4" y="8" width="1" height="1" fill="#000"/><rect x="6" y="8" width="1" height="1" fill="#000"/><rect x="8" y="8" width="1" height="1" fill="#000"/><rect x="13" y="8" width="1" height="1" fill="#000"/><rect x="0" y="9" width="1" height="1" fill="#000"/><rect x="1" y="9" width="3" height="1" fill="#c8c8c8"/><rect x="4" y="9" width="1" height="1" fill="#000"/><rect x="6" y="9" width="2" height="1" fill="#000"/><rect x="9" y="9" width="4" height="1" fill="#c8c8c8"/><rect x="13" y="9" width="1" height="1" fill="#000"/><rect x="0" y="10" width="1" height="1" fill="#000"/><rect x="4" y="10" width="1" height="1" fill="#000"/><rect x="6" y="10" width="1" height="1" fill="#000"/><rect x="13" y="10" width="1" height="1" fill="#000"/><rect x="0" y="11" width="1" height="1" fill="#000"/><rect x="4" y="11" width="1" height="1" fill="#000"/><rect x="6" y="11" width="1" height="1" fill="#000"/><rect x="13" y="11" width="1" height="1" fill="#000"/><rect x="0" y="12" width="1" height="1" fill="#000"/><rect x="4" y="12" width="1" height="1" fill="#000"/><rect x="6" y="12" width="1" height="1" fill="#000"/><rect x="13" y="12" width="1" height="1" fill="#000"/><rect x="0" y="13" width="14" height="1" fill="#000"/></g><circle cx="10.6" cy="3.8" r="1.7" fill="#8f8f8f"/></svg></div><i class="I"></i><span class="c1" style="letter-spacing:-0.12px">NewRespToMain.gif</span><span class="bar" style="left:132.37px">|</span><span class="c1" style="left:141.80px;letter-spacing:-0.12px">NewRespToMain.gif</span><span class="c2">Alfred Test1/YTRIA</span><span class="c3">28/01/2005 1:37:</span></div>
<div class="row" style="top:337px"><div class="ic" style="top:1px"><svg width="14" height="14" viewBox="0 0 14 14"><rect width="14" height="14" fill="#fff"/><g shape-rendering="crispEdges"><rect x="0" y="0" width="14" height="1" fill="#000"/><rect x="0" y="1" width="1" height="1" fill="#000"/><rect x="13" y="1" width="1" height="1" fill="#000"/><rect x="0" y="2" width="1" height="1" fill="#000"/><rect x="5" y="2" width="1" height="1" fill="#000"/><rect x="13" y="2" width="1" height="1" fill="#000"/><rect x="0" y="3" width="1" height="1" fill="#000"/><rect x="4" y="3" width="1" height="1" fill="#000"/><rect x="6" y="3" width="1" height="1" fill="#000"/><rect x="13" y="3" width="1" height="1" fill="#000"/><rect x="0" y="4" width="1" height="1" fill="#000"/><rect x="3" y="4" width="2" height="1" fill="#000"/><rect x="6" y="4" width="1" height="1" fill="#000"/><rect x="13" y="4" width="1" height="1" fill="#000"/><rect x="0" y="5" width="1" height="1" fill="#000"/><rect x="2" y="5" width="1" height="1" fill="#000"/><rect x="4" y="5" width="1" height="1" fill="#000"/><rect x="6" y="5" width="2" height="1" fill="#000"/><rect x="13" y="5" width="1" height="1" fill="#000"/><rect x="0" y="6" width="1" height="1" fill="#000"/><rect x="2" y="6" width="1" height="1" fill="#000"/><rect x="4" y="6" width="1" height="1" fill="#000"/><rect x="6" y="6" width="1" height="1" fill="#000"/><rect x="8" y="6" width="1" height="1" fill="#000"/><rect x="13" y="6" width="1" height="1" fill="#000"/><rect x="0" y="7" width="1" height="1" fill="#000"/><rect x="3" y="7" width="2" height="1" fill="#000"/><rect x="6" y="7" width="1" height="1" fill="#000"/><rect x="8" y="7" width="1" height="1" fill="#000"/><rect x="13" y="7" width="1" height="1" fill="#000"/><rect x="0" y="8" width="1" height="1" fill="#000"/><rect x="4" y="8" width="1" height="1" fill="#000"/><rect x="6" y="8" width="1" height="1" fill="#000"/><rect x="8" y="8" width="1" height="1" fill="#000"/><rect x="13" y="8" width="1" height="1" fill="#000"/><rect x="0" y="9" width="1" height="1" fill="#000"/><rect x="1" y="9" width="3" height="1" fill="#c8c8c8"/><rect x="4" y="9" width="1" height="1" fill="#000"/><rect x="6" y="9" width="2" height="1" fill="#000"/><rect x="9" y="9" width="4" height="1" fill="#c8c8c8"/><rect x="13" y="9" width="1" height="1" fill="#000"/><rect x="0" y="10" width="1" height="1" fill="#000"/><rect x="4" y="10" width="1" height="1" fill="#000"/><rect x="6" y="10" width="1" height="1" fill="#000"/><rect x="13" y="10" width="1" height="1" fill="#000"/><rect x="0" y="11" width="1" height="1" fill="#000"/><rect x="4" y="11" width="1" height="1" fill="#000"/><rect x="6" y="11" width="1" height="1" fill="#000"/><rect x="13" y="11" width="1" height="1" fill="#000"/><rect x="0" y="12" width="1" height="1" fill="#000"/><rect x="4" y="12" width="1" height="1" fill="#000"/><rect x="6" y="12" width="1" height="1" fill="#000"/><rect x="13" y="12" width="1" height="1" fill="#000"/><rect x="0" y="13" width="14" height="1" fill="#000"/></g><circle cx="10.6" cy="3.8" r="1.7" fill="#8f8f8f"/></svg></div><i class="I"></i><span class="c1" style="letter-spacing:-0.13px">NewRespToResp.gif</span><span class="bar" style="left:134.07px">|</span><span class="c1" style="left:143.50px;letter-spacing:-0.13px">NewRespToResp.gif</span><span class="c2">Alfred Test1/YTRIA</span><span class="c3">28/01/2005 1:37:</span></div>
<div class="row" style="top:355px"><div class="ic" style="top:1px"><svg width="14" height="14" viewBox="0 0 14 14"><rect width="14" height="14" fill="#fff"/><g shape-rendering="crispEdges"><rect x="0" y="0" width="14" height="1" fill="#000"/><rect x="0" y="1" width="1" height="1" fill="#000"/><rect x="13" y="1" width="1" height="1" fill="#000"/><rect x="0" y="2" width="1" height="1" fill="#000"/><rect x="5" y="2" width="1" height="1" fill="#000"/><rect x="13" y="2" width="1" height="1" fill="#000"/><rect x="0" y="3" width="1" height="1" fill="#000"/><rect x="4" y="3" width="1" height="1" fill="#000"/><rect x="6" y="3" width="1" height="1" fill="#000"/><rect x="13" y="3" width="1" height="1" fill="#000"/><rect x="0" y="4" width="1" height="1" fill="#000"/><rect x="3" y="4" width="2" height="1" fill="#000"/><rect x="6" y="4" width="1" height="1" fill="#000"/><rect x="13" y="4" width="1" height="1" fill="#000"/><rect x="0" y="5" width="1" height="1" fill="#000"/><rect x="2" y="5" width="1" height="1" fill="#000"/><rect x="4" y="5" width="1" height="1" fill="#000"/><rect x="6" y="5" width="2" height="1" fill="#000"/><rect x="13" y="5" width="1" height="1" fill="#000"/><rect x="0" y="6" width="1" height="1" fill="#000"/><rect x="2" y="6" width="1" height="1" fill="#000"/><rect x="4" y="6" width="1" height="1" fill="#000"/><rect x="6" y="6" width="1" height="1" fill="#000"/><rect x="8" y="6" width="1" height="1" fill="#000"/><rect x="13" y="6" width="1" height="1" fill="#000"/><rect x="0" y="7" width="1" height="1" fill="#000"/><rect x="3" y="7" width="2" height="1" fill="#000"/><rect x="6" y="7" width="1" height="1" fill="#000"/><rect x="8" y="7" width="1" height="1" fill="#000"/><rect x="13" y="7" width="1" height="1" fill="#000"/><rect x="0" y="8" width="1" height="1" fill="#000"/><rect x="4" y="8" width="1" height="1" fill="#000"/><rect x="6" y="8" width="1" height="1" fill="#000"/><rect x="8" y="8" width="1" height="1" fill="#000"/><rect x="13" y="8" width="1" height="1" fill="#000"/><rect x="0" y="9" width="1" height="1" fill="#000"/><rect x="1" y="9" width="3" height="1" fill="#c8c8c8"/><rect x="4" y="9" width="1" height="1" fill="#000"/><rect x="6" y="9" width="2" height="1" fill="#000"/><rect x="9" y="9" width="4" height="1" fill="#c8c8c8"/><rect x="13" y="9" width="1" height="1" fill="#000"/><rect x="0" y="10" width="1" height="1" fill="#000"/><rect x="4" y="10" width="1" height="1" fill="#000"/><rect x="6" y="10" width="1" height="1" fill="#000"/><rect x="13" y="10" width="1" height="1" fill="#000"/><rect x="0" y="11" width="1" height="1" fill="#000"/><rect x="4" y="11" width="1" height="1" fill="#000"/><rect x="6" y="11" width="1" height="1" fill="#000"/><rect x="13" y="11" width="1" height="1" fill="#000"/><rect x="0" y="12" width="1" height="1" fill="#000"/><rect x="4" y="12" width="1" height="1" fill="#000"/><rect x="6" y="12" width="1" height="1" fill="#000"/><rect x="13" y="12" width="1" height="1" fill="#000"/><rect x="0" y="13" width="14" height="1" fill="#000"/></g><circle cx="10.6" cy="3.8" r="1.7" fill="#8f8f8f"/></svg></div><i class="I"></i><span class="c1" style="letter-spacing:-0.13px">NewResponse.gif</span><span class="bar" style="left:120.77px">|</span><span class="c1" style="left:130.20px;letter-spacing:-0.13px">NewResponse.gif</span><span class="c2">Alfred Test1/YTRIA</span><span class="c3">28/01/2005 1:37:</span></div>
<div class="row" style="top:373px"><div class="ic" style="top:1px"><svg width="14" height="14" viewBox="0 0 14 14"><rect width="14" height="14" fill="#fff"/><g shape-rendering="crispEdges"><rect x="0" y="0" width="14" height="1" fill="#000"/><rect x="0" y="1" width="1" height="1" fill="#000"/><rect x="13" y="1" width="1" height="1" fill="#000"/><rect x="0" y="2" width="1" height="1" fill="#000"/><rect x="5" y="2" width="1" height="1" fill="#000"/><rect x="13" y="2" width="1" height="1" fill="#000"/><rect x="0" y="3" width="1" height="1" fill="#000"/><rect x="4" y="3" width="1" height="1" fill="#000"/><rect x="6" y="3" width="1" height="1" fill="#000"/><rect x="13" y="3" width="1" height="1" fill="#000"/><rect x="0" y="4" width="1" height="1" fill="#000"/><rect x="3" y="4" width="2" height="1" fill="#000"/><rect x="6" y="4" width="1" height="1" fill="#000"/><rect x="13" y="4" width="1" height="1" fill="#000"/><rect x="0" y="5" width="1" height="1" fill="#000"/><rect x="2" y="5" width="1" height="1" fill="#000"/><rect x="4" y="5" width="1" height="1" fill="#000"/><rect x="6" y="5" width="2" height="1" fill="#000"/><rect x="13" y="5" width="1" height="1" fill="#000"/><rect x="0" y="6" width="1" height="1" fill="#000"/><rect x="2" y="6" width="1" height="1" fill="#000"/><rect x="4" y="6" width="1" height="1" fill="#000"/><rect x="6" y="6" width="1" height="1" fill="#000"/><rect x="8" y="6" width="1" height="1" fill="#000"/><rect x="13" y="6" width="1" height="1" fill="#000"/><rect x="0" y="7" width="1" height="1" fill="#000"/><rect x="3" y="7" width="2" height="1" fill="#000"/><rect x="6" y="7" width="1" height="1" fill="#000"/><rect x="8" y="7" width="1" height="1" fill="#000"/><rect x="13" y="7" width="1" height="1" fill="#000"/><rect x="0" y="8" width="1" height="1" fill="#000"/><rect x="4" y="8" width="1" height="1" fill="#000"/><rect x="6" y="8" width="1" height="1" fill="#000"/><rect x="8" y="8" width="1" height="1" fill="#000"/><rect x="13" y="8" width="1" height="1" fill="#000"/><rect x="0" y="9" width="1" height="1" fill="#000"/><rect x="1" y="9" width="3" height="1" fill="#c8c8c8"/><rect x="4" y="9" width="1" height="1" fill="#000"/><rect x="6" y="9" width="2" height="1" fill="#000"/><rect x="9" y="9" width="4" height="1" fill="#c8c8c8"/><rect x="13" y="9" width="1" height="1" fill="#000"/><rect x="0" y="10" width="1" height="1" fill="#000"/><rect x="4" y="10" width="1" height="1" fill="#000"/><rect x="6" y="10" width="1" height="1" fill="#000"/><rect x="13" y="10" width="1" height="1" fill="#000"/><rect x="0" y="11" width="1" height="1" fill="#000"/><rect x="4" y="11" width="1" height="1" fill="#000"/><rect x="6" y="11" width="1" height="1" fill="#000"/><rect x="13" y="11" width="1" height="1" fill="#000"/><rect x="0" y="12" width="1" height="1" fill="#000"/><rect x="4" y="12" width="1" height="1" fill="#000"/><rect x="6" y="12" width="1" height="1" fill="#000"/><rect x="13" y="12" width="1" height="1" fill="#000"/><rect x="0" y="13" width="14" height="1" fill="#000"/></g><circle cx="10.6" cy="3.8" r="1.7" fill="#8f8f8f"/></svg></div><i class="I"></i><span class="c1" style="letter-spacing:0.06px">ParentPreview.gif</span><span class="bar" style="left:123.27px">|</span><span class="c1" style="left:132.70px;letter-spacing:0.06px">ParentPreview.gif</span><span class="c2">Alfred Test1/YTRIA</span><span class="c3">28/01/2005 1:37:</span></div>
<div class="row" style="top:391px"><div class="ic" style="top:1px"><svg width="14" height="14" viewBox="0 0 14 14"><rect width="14" height="14" fill="#fff"/><g shape-rendering="crispEdges"><rect x="0" y="0" width="14" height="1" fill="#000"/><rect x="0" y="1" width="1" height="1" fill="#000"/><rect x="13" y="1" width="1" height="1" fill="#000"/><rect x="0" y="2" width="1" height="1" fill="#000"/><rect x="5" y="2" width="1" height="1" fill="#000"/><rect x="13" y="2" width="1" height="1" fill="#000"/><rect x="0" y="3" width="1" height="1" fill="#000"/><rect x="4" y="3" width="1" height="1" fill="#000"/><rect x="6" y="3" width="1" height="1" fill="#000"/><rect x="13" y="3" width="1" height="1" fill="#000"/><rect x="0" y="4" width="1" height="1" fill="#000"/><rect x="3" y="4" width="2" height="1" fill="#000"/><rect x="6" y="4" width="1" height="1" fill="#000"/><rect x="13" y="4" width="1" height="1" fill="#000"/><rect x="0" y="5" width="1" height="1" fill="#000"/><rect x="2" y="5" width="1" height="1" fill="#000"/><rect x="4" y="5" width="1" height="1" fill="#000"/><rect x="6" y="5" width="2" height="1" fill="#000"/><rect x="13" y="5" width="1" height="1" fill="#000"/><rect x="0" y="6" width="1" height="1" fill="#000"/><rect x="2" y="6" width="1" height="1" fill="#000"/><rect x="4" y="6" width="1" height="1" fill="#000"/><rect x="6" y="6" width="1" height="1" fill="#000"/><rect x="8" y="6" width="1" height="1" fill="#000"/><rect x="13" y="6" width="1" height="1" fill="#000"/><rect x="0" y="7" width="1" height="1" fill="#000"/><rect x="3" y="7" width="2" height="1" fill="#000"/><rect x="6" y="7" width="1" height="1" fill="#000"/><rect x="8" y="7" width="1" height="1" fill="#000"/><rect x="13" y="7" width="1" height="1" fill="#000"/><rect x="0" y="8" width="1" height="1" fill="#000"/><rect x="4" y="8" width="1" height="1" fill="#000"/><rect x="6" y="8" width="1" height="1" fill="#000"/><rect x="8" y="8" width="1" height="1" fill="#000"/><rect x="13" y="8" width="1" height="1" fill="#000"/><rect x="0" y="9" width="1" height="1" fill="#000"/><rect x="1" y="9" width="3" height="1" fill="#c8c8c8"/><rect x="4" y="9" width="1" height="1" fill="#000"/><rect x="6" y="9" width="2" height="1" fill="#000"/><rect x="9" y="9" width="4" height="1" fill="#c8c8c8"/><rect x="13" y="9" width="1" height="1" fill="#000"/><rect x="0" y="10" width="1" height="1" fill="#000"/><rect x="4" y="10" width="1" height="1" fill="#000"/><rect x="6" y="10" width="1" height="1" fill="#000"/><rect x="13" y="10" width="1" height="1" fill="#000"/><rect x="0" y="11" width="1" height="1" fill="#000"/><rect x="4" y="11" width="1" height="1" fill="#000"/><rect x="6" y="11" width="1" height="1" fill="#000"/><rect x="13" y="11" width="1" height="1" fill="#000"/><rect x="0" y="12" width="1" height="1" fill="#000"/><rect x="4" y="12" width="1" height="1" fill="#000"/><rect x="6" y="12" width="1" height="1" fill="#000"/><rect x="13" y="12" width="1" height="1" fill="#000"/><rect x="0" y="13" width="14" height="1" fill="#000"/></g><circle cx="10.6" cy="3.8" r="1.7" fill="#8f8f8f"/></svg></div><i class="I"></i><span class="c1" style="letter-spacing:-0.07px">SubmitForReview.gif</span><span class="bar" style="left:136.07px">|</span><span class="c1" style="left:145.50px;letter-spacing:-0.07px">SubmitForReview.gif</span><span class="c2">Alfred Test1/YTRIA</span><span class="c3">28/01/2005 1:37:</span></div>
<div class="row" style="top:409px"><div class="ic" style="top:1px"><svg width="14" height="14" viewBox="0 0 14 14"><rect width="14" height="14" fill="#fff"/><g shape-rendering="crispEdges"><rect x="0" y="0" width="14" height="1" fill="#000"/><rect x="0" y="1" width="1" height="1" fill="#000"/><rect x="13" y="1" width="1" height="1" fill="#000"/><rect x="0" y="2" width="1" height="1" fill="#000"/><rect x="5" y="2" width="1" height="1" fill="#000"/><rect x="13" y="2" width="1" height="1" fill="#000"/><rect x="0" y="3" width="1" height="1" fill="#000"/><rect x="4" y="3" width="1" height="1" fill="#000"/><rect x="6" y="3" width="1" height="1" fill="#000"/><rect x="13" y="3" width="1" height="1" fill="#000"/><rect x="0" y="4" width="1" height="1" fill="#000"/><rect x="3" y="4" width="2" height="1" fill="#000"/><rect x="6" y="4" width="1" height="1" fill="#000"/><rect x="13" y="4" width="1" height="1" fill="#000"/><rect x="0" y="5" width="1" height="1" fill="#000"/><rect x="2" y="5" width="1" height="1" fill="#000"/><rect x="4" y="5" width="1" height="1" fill="#000"/><rect x="6" y="5" width="2" height="1" fill="#000"/><rect x="13" y="5" width="1" height="1" fill="#000"/><rect x="0" y="6" width="1" height="1" fill="#000"/><rect x="2" y="6" width="1" height="1" fill="#000"/><rect x="4" y="6" width="1" height="1" fill="#000"/><rect x="6" y="6" width="1" height="1" fill="#000"/><rect x="8" y="6" width="1" height="1" fill="#000"/><rect x="13" y="6" width="1" height="1" fill="#000"/><rect x="0" y="7" width="1" height="1" fill="#000"/><rect x="3" y="7" width="2" height="1" fill="#000"/><rect x="6" y="7" width="1" height="1" fill="#000"/><rect x="8" y="7" width="1" height="1" fill="#000"/><rect x="13" y="7" width="1" height="1" fill="#000"/><rect x="0" y="8" width="1" height="1" fill="#000"/><rect x="4" y="8" width="1" height="1" fill="#000"/><rect x="6" y="8" width="1" height="1" fill="#000"/><rect x="8" y="8" width="1" height="1" fill="#000"/><rect x="13" y="8" width="1" height="1" fill="#000"/><rect x="0" y="9" width="1" height="1" fill="#000"/><rect x="1" y="9" width="3" height="1" fill="#c8c8c8"/><rect x="4" y="9" width="1" height="1" fill="#000"/><rect x="6" y="9" width="2" height="1" fill="#000"/><rect x="9" y="9" width="4" height="1" fill="#c8c8c8"/><rect x="13" y="9" width="1" height="1" fill="#000"/><rect x="0" y="10" width="1" height="1" fill="#000"/><rect x="4" y="10" width="1" height="1" fill="#000"/><rect x="6" y="10" width="1" height="1" fill="#000"/><rect x="13" y="10" width="1" height="1" fill="#000"/><rect x="0" y="11" width="1" height="1" fill="#000"/><rect x="4" y="11" width="1" height="1" fill="#000"/><rect x="6" y="11" width="1" height="1" fill="#000"/><rect x="13" y="11" width="1" height="1" fill="#000"/><rect x="0" y="12" width="1" height="1" fill="#000"/><rect x="4" y="12" width="1" height="1" fill="#000"/><rect x="6" y="12" width="1" height="1" fill="#000"/><rect x="13" y="12" width="1" height="1" fill="#000"/><rect x="0" y="13" width="14" height="1" fill="#000"/></g><circle cx="10.6" cy="3.8" r="1.7" fill="#8f8f8f"/></svg></div><i class="I"></i><span class="c1" style="letter-spacing:0.00px">cancel.gif</span><span class="bar" style="left:83.07px">|</span><span class="c1" style="left:92.50px;letter-spacing:0.00px">cancel.gif</span><span class="c2">Alfred Test1/YTRIA</span><span class="c3">28/01/2005 1:37:</span></div>
<div class="row" style="top:427px"><div class="ic" style="top:1px"><svg width="14" height="14" viewBox="0 0 14 14"><rect width="14" height="14" fill="#fff"/><g shape-rendering="crispEdges"><rect x="0" y="0" width="14" height="1" fill="#000"/><rect x="0" y="1" width="1" height="1" fill="#000"/><rect x="13" y="1" width="1" height="1" fill="#000"/><rect x="0" y="2" width="1" height="1" fill="#000"/><rect x="5" y="2" width="1" height="1" fill="#000"/><rect x="13" y="2" width="1" height="1" fill="#000"/><rect x="0" y="3" width="1" height="1" fill="#000"/><rect x="4" y="3" width="1" height="1" fill="#000"/><rect x="6" y="3" width="1" height="1" fill="#000"/><rect x="13" y="3" width="1" height="1" fill="#000"/><rect x="0" y="4" width="1" height="1" fill="#000"/><rect x="3" y="4" width="2" height="1" fill="#000"/><rect x="6" y="4" width="1" height="1" fill="#000"/><rect x="13" y="4" width="1" height="1" fill="#000"/><rect x="0" y="5" width="1" height="1" fill="#000"/><rect x="2" y="5" width="1" height="1" fill="#000"/><rect x="4" y="5" width="1" height="1" fill="#000"/><rect x="6" y="5" width="2" height="1" fill="#000"/><rect x="13" y="5" width="1" height="1" fill="#000"/><rect x="0" y="6" width="1" height="1" fill="#000"/><rect x="2" y="6" width="1" height="1" fill="#000"/><rect x="4" y="6" width="1" height="1" fill="#000"/><rect x="6" y="6" width="1" height="1" fill="#000"/><rect x="8" y="6" width="1" height="1" fill="#000"/><rect x="13" y="6" width="1" height="1" fill="#000"/><rect x="0" y="7" width="1" height="1" fill="#000"/><rect x="3" y="7" width="2" height="1" fill="#000"/><rect x="6" y="7" width="1" height="1" fill="#000"/><rect x="8" y="7" width="1" height="1" fill="#000"/><rect x="13" y="7" width="1" height="1" fill="#000"/><rect x="0" y="8" width="1" height="1" fill="#000"/><rect x="4" y="8" width="1" height="1" fill="#000"/><rect x="6" y="8" width="1" height="1" fill="#000"/><rect x="8" y="8" width="1" height="1" fill="#000"/><rect x="13" y="8" width="1" height="1" fill="#000"/><rect x="0" y="9" width="1" height="1" fill="#000"/><rect x="1" y="9" width="3" height="1" fill="#c8c8c8"/><rect x="4" y="9" width="1" height="1" fill="#000"/><rect x="6" y="9" width="2" height="1" fill="#000"/><rect x="9" y="9" width="4" height="1" fill="#c8c8c8"/><rect x="13" y="9" width="1" height="1" fill="#000"/><rect x="0" y="10" width="1" height="1" fill="#000"/><rect x="4" y="10" width="1" height="1" fill="#000"/><rect x="6" y="10" width="1" height="1" fill="#000"/><rect x="13" y="10" width="1" height="1" fill="#000"/><rect x="0" y="11" width="1" height="1" fill="#000"/><rect x="4" y="11" width="1" height="1" fill="#000"/><rect x="6" y="11" width="1" height="1" fill="#000"/><rect x="13" y="11" width="1" height="1" fill="#000"/><rect x="0" y="12" width="1" height="1" fill="#000"/><rect x="4" y="12" width="1" height="1" fill="#000"/><rect x="6" y="12" width="1" height="1" fill="#000"/><rect x="13" y="12" width="1" height="1" fill="#000"/><rect x="0" y="13" width="14" height="1" fill="#000"/></g><circle cx="10.6" cy="3.8" r="1.7" fill="#8f8f8f"/></svg></div><i class="I"></i><span class="c1" style="letter-spacing:0.27px">edit.gif</span><span class="bar" style="left:71.17px">|</span><span class="c1" style="left:80.60px;letter-spacing:0.27px">edit.gif</span><span class="c2">Alfred Test1/YTRIA</span><span class="c3">28/01/2005 1:37:</span></div>
<div class="row" style="top:445px"><div class="ic" style="top:1px"><svg width="14" height="14" viewBox="0 0 14 14"><rect width="14" height="14" fill="#fff"/><g shape-rendering="crispEdges"><rect x="0" y="0" width="14" height="1" fill="#000"/><rect x="0" y="1" width="1" height="1" fill="#000"/><rect x="13" y="1" width="1" height="1" fill="#000"/><rect x="0" y="2" width="1" height="1" fill="#000"/><rect x="5" y="2" width="1" height="1" fill="#000"/><rect x="13" y="2" width="1" height="1" fill="#000"/><rect x="0" y="3" width="1" height="1" fill="#000"/><rect x="4" y="3" width="1" height="1" fill="#000"/><rect x="6" y="3" width="1" height="1" fill="#000"/><rect x="13" y="3" width="1" height="1" fill="#000"/><rect x="0" y="4" width="1" height="1" fill="#000"/><rect x="3" y="4" width="2" height="1" fill="#000"/><rect x="6" y="4" width="1" height="1" fill="#000"/><rect x="13" y="4" width="1" height="1" fill="#000"/><rect x="0" y="5" width="1" height="1" fill="#000"/><rect x="2" y="5" width="1" height="1" fill="#000"/><rect x="4" y="5" width="1" height="1" fill="#000"/><rect x="6" y="5" width="2" height="1" fill="#000"/><rect x="13" y="5" width="1" height="1" fill="#000"/><rect x="0" y="6" width="1" height="1" fill="#000"/><rect x="2" y="6" width="1" height="1" fill="#000"/><rect x="4" y="6" width="1" height="1" fill="#000"/><rect x="6" y="6" width="1" height="1" fill="#000"/><rect x="8" y="6" width="1" height="1" fill="#000"/><rect x="13" y="6" width="1" height="1" fill="#000"/><rect x="0" y="7" width="1" height="1" fill="#000"/><rect x="3" y="7" width="2" height="1" fill="#000"/><rect x="6" y="7" width="1" height="1" fill="#000"/><rect x="8" y="7" width="1" height="1" fill="#000"/><rect x="13" y="7" width="1" height="1" fill="#000"/><rect x="0" y="8" width="1" height="1" fill="#000"/><rect x="4" y="8" width="1" height="1" fill="#000"/><rect x="6" y="8" width="1" height="1" fill="#000"/><rect x="8" y="8" width="1" height="1" fill="#000"/><rect x="13" y="8" width="1" height="1" fill="#000"/><rect x="0" y="9" width="1" height="1" fill="#000"/><rect x="1" y="9" width="3" height="1" fill="#c8c8c8"/><rect x="4" y="9" width="1" height="1" fill="#000"/><rect x="6" y="9" width="2" height="1" fill="#000"/><rect x="9" y="9" width="4" height="1" fill="#c8c8c8"/><rect x="13" y="9" width="1" height="1" fill="#000"/><rect x="0" y="10" width="1" height="1" fill="#000"/><rect x="4" y="10" width="1" height="1" fill="#000"/><rect x="6" y="10" width="1" height="1" fill="#000"/><rect x="13" y="10" width="1" height="1" fill="#000"/><rect x="0" y="11" width="1" height="1" fill="#000"/><rect x="4" y="11" width="1" height="1" fill="#000"/><rect x="6" y="11" width="1" height="1" fill="#000"/><rect x="13" y="11" width="1" height="1" fill="#000"/><rect x="0" y="12" width="1" height="1" fill="#000"/><rect x="4" y="12" width="1" height="1" fill="#000"/><rect x="6" y="12" width="1" height="1" fill="#000"/><rect x="13" y="12" width="1" height="1" fill="#000"/><rect x="0" y="13" width="14" height="1" fill="#000"/></g><circle cx="10.6" cy="3.8" r="1.7" fill="#8f8f8f"/></svg></div><i class="I"></i><span class="c1" style="letter-spacing:0.18px">save.gif</span><span class="bar" style="left:75.97px">|</span><span class="c1" style="left:85.40px;letter-spacing:0.18px">save.gif</span><span class="c2">Alfred Test1/YTRIA</span><span class="c3">28/01/2005 1:37:</span></div>
<div class="row" style="top:463px"><div class="ic" style="top:1px"><svg width="14" height="14" viewBox="0 0 14 14"><rect width="14" height="14" fill="#fff"/><g shape-rendering="crispEdges"><rect x="0" y="0" width="14" height="1" fill="#000"/><rect x="0" y="1" width="1" height="1" fill="#000"/><rect x="13" y="1" width="1" height="1" fill="#000"/><rect x="0" y="2" width="1" height="1" fill="#000"/><rect x="5" y="2" width="1" height="1" fill="#000"/><rect x="13" y="2" width="1" height="1" fill="#000"/><rect x="0" y="3" width="1" height="1" fill="#000"/><rect x="4" y="3" width="1" height="1" fill="#000"/><rect x="6" y="3" width="1" height="1" fill="#000"/><rect x="13" y="3" width="1" height="1" fill="#000"/><rect x="0" y="4" width="1" height="1" fill="#000"/><rect x="3" y="4" width="2" height="1" fill="#000"/><rect x="6" y="4" width="1" height="1" fill="#000"/><rect x="13" y="4" width="1" height="1" fill="#000"/><rect x="0" y="5" width="1" height="1" fill="#000"/><rect x="2" y="5" width="1" height="1" fill="#000"/><rect x="4" y="5" width="1" height="1" fill="#000"/><rect x="6" y="5" width="2" height="1" fill="#000"/><rect x="13" y="5" width="1" height="1" fill="#000"/><rect x="0" y="6" width="1" height="1" fill="#000"/><rect x="2" y="6" width="1" height="1" fill="#000"/><rect x="4" y="6" width="1" height="1" fill="#000"/><rect x="6" y="6" width="1" height="1" fill="#000"/><rect x="8" y="6" width="1" height="1" fill="#000"/><rect x="13" y="6" width="1" height="1" fill="#000"/><rect x="0" y="7" width="1" height="1" fill="#000"/><rect x="3" y="7" width="2" height="1" fill="#000"/><rect x="6" y="7" width="1" height="1" fill="#000"/><rect x="8" y="7" width="1" height="1" fill="#000"/><rect x="13" y="7" width="1" height="1" fill="#000"/><rect x="0" y="8" width="1" height="1" fill="#000"/><rect x="4" y="8" width="1" height="1" fill="#000"/><rect x="6" y="8" width="1" height="1" fill="#000"/><rect x="8" y="8" width="1" height="1" fill="#000"/><rect x="13" y="8" width="1" height="1" fill="#000"/><rect x="0" y="9" width="1" height="1" fill="#000"/><rect x="1" y="9" width="3" height="1" fill="#c8c8c8"/><rect x="4" y="9" width="1" height="1" fill="#000"/><rect x="6" y="9" width="2" height="1" fill="#000"/><rect x="9" y="9" width="4" height="1" fill="#c8c8c8"/><rect x="13" y="9" width="1" height="1" fill="#000"/><rect x="0" y="10" width="1" height="1" fill="#000"/><rect x="4" y="10" width="1" height="1" fill="#000"/><rect x="6" y="10" width="1" height="1" fill="#000"/><rect x="13" y="10" width="1" height="1" fill="#000"/><rect x="0" y="11" width="1" height="1" fill="#000"/><rect x="4" y="11" width="1" height="1" fill="#000"/><rect x="6" y="11" width="1" height="1" fill="#000"/><rect x="13" y="11" width="1" height="1" fill="#000"/><rect x="0" y="12" width="1" height="1" fill="#000"/><rect x="4" y="12" width="1" height="1" fill="#000"/><rect x="6" y="12" width="1" height="1" fill="#000"/><rect x="13" y="12" width="1" height="1" fill="#000"/><rect x="0" y="13" width="14" height="1" fill="#000"/></g><circle cx="10.6" cy="3.8" r="1.7" fill="#8f8f8f"/></svg></div><i class="I"></i><span class="c1" style="letter-spacing:0.08px">search.gif</span><span class="bar" style="left:85.07px">|</span><span class="c1" style="left:94.50px;letter-spacing:0.08px">search.gif</span><span class="c2">Alfred Test1/YTRIA</span><span class="c3">28/01/2005 1:37:</span></div>
<div class="vl" style="left:31px"></div>
<div class="vl" style="left:331px"></div>
<div class="vl" style="left:631px"></div>
</div>
<div id="vsb"></div>
<div id="hsb"></div>
<div id="corner"></div>
<div class="sb" style="left:731px;top:101px;width:15px;height:15px"></div><svg class="abs" style="left:734px;top:105px" width="9" height="6" shape-rendering="crispEdges" fill="#4d6185"><rect x="4" y="0" width="1" height="1"/><rect x="3" y="1" width="3" height="1"/><rect x="2" y="2" width="5" height="1"/><rect x="1" y="3" width="3" height="1"/><rect x="5" y="3" width="3" height="1"/><rect x="0" y="4" width="3" height="1"/><rect x="6" y="4" width="3" height="1"/><rect x="0" y="5" width="2" height="1"/><rect x="7" y="5" width="2" height="1"/></svg>
<div class="th" style="left:731px;top:280px;width:15px;height:97px;background:linear-gradient(to right,#c9d5f8,#bdd0fa 50%,#b0cbfa)"></div>
<div class="abs" style="left:736px;top:325px;width:6px;height:1px;background:#eef3fe;box-shadow:0 1px 0 #8cb0f8,0 2px 0 #eef3fe,0 3px 0 #8cb0f8,0 4px 0 #eef3fe,0 5px 0 #8cb0f8,0 6px 0 #eef3fe,0 7px 0 #8cb0f8"></div>
<div class="sb" style="left:731px;top:465px;width:15px;height:16px"></div><svg class="abs" style="left:734px;top:471px" width="9" height="6" shape-rendering="crispEdges" fill="#4d6185"><rect x="0" y="0" width="2" height="1"/><rect x="7" y="0" width="2" height="1"/><rect x="0" y="1" width="3" height="1"/><rect x="6" y="1" width="3" height="1"/><rect x="1" y="2" width="3" height="1"/><rect x="5" y="2" width="3" height="1"/><rect x="2" y="3" width="5" height="1"/><rect x="3" y="4" width="3" height="1"/><rect x="4" y="5" width="1" height="1"/></svg>
<div class="sb" style="left:12px;top:483px;width:16px;height:15px"></div><svg class="abs" style="left:16px;top:486px" width="6" height="9" shape-rendering="crispEdges" fill="#4d6185"><rect x="4" y="0" width="2" height="1"/><rect x="3" y="1" width="3" height="1"/><rect x="2" y="2" width="3" height="1"/><rect x="1" y="3" width="3" height="1"/><rect x="0" y="4" width="3" height="1"/><rect x="1" y="5" width="3" height="1"/><rect x="2" y="6" width="3" height="1"/><rect x="3" y="7" width="3" height="1"/><rect x="4" y="8" width="2" height="1"/></svg>
<div class="th" style="left:29px;top:483px;width:462px;height:15px;background:linear-gradient(to bottom,#c9d5f8,#bdd0fa 50%,#b0cbfa)"></div>
<div class="abs" style="left:256px;top:487px;width:1px;height:6px;background:#eef3fe;box-shadow:1px 0 0 #8cb0f8,2px 0 0 #eef3fe,3px 0 0 #8cb0f8,4px 0 0 #eef3fe,5px 0 0 #8cb0f8,6px 0 0 #eef3fe,7px 0 0 #8cb0f8"></div>
<div class="sb" style="left:713px;top:483px;width:16px;height:15px"></div><svg class="abs" style="left:719px;top:486px" width="6" height="9" shape-rendering="crispEdges" fill="#4d6185"><rect x="0" y="0" width="2" height="1"/><rect x="0" y="1" width="3" height="1"/><rect x="1" y="2" width="3" height="1"/><rect x="2" y="3" width="3" height="1"/><rect x="3" y="4" width="3" height="1"/><rect x="2" y="5" width="3" height="1"/><rect x="1" y="6" width="3" height="1"/><rect x="0" y="7" width="3" height="1"/><rect x="0" y="8" width="2" height="1"/></svg>
<div class="btn" style="left:13px;top:511px;width:88px;letter-spacing:-0.25px"><u>E</u>xport to File...</div>
<div class="btn" style="left:673px;top:511px;width:73px;font-weight:bold;box-shadow:inset 0 1px 0 #cee7ff,inset 0 -1px 0 #6982ee,inset 1px 0 0 #b8d0f8,inset -1px 0 0 #8fa8f0,inset 0 2px 0 #bcd4f6,inset 0 -2px 0 #89adef"><div class="abs" style="left:1px;top:1px;right:1px;bottom:1px;border:1px dotted #6a4a3a"></div><u>O</u>K</div>
<div class="grip" style="left:751px;top:529px"></div>
<div class="grip" style="left:747px;top:533px"></div><div class="grip" style="left:751px;top:533px"></div>
<div class="grip" style="left:743px;top:537px"></div><div class="grip" style="left:747px;top:537px"></div><div class="grip" style="left:751px;top:537px"></div>
</div>
</body></html>
